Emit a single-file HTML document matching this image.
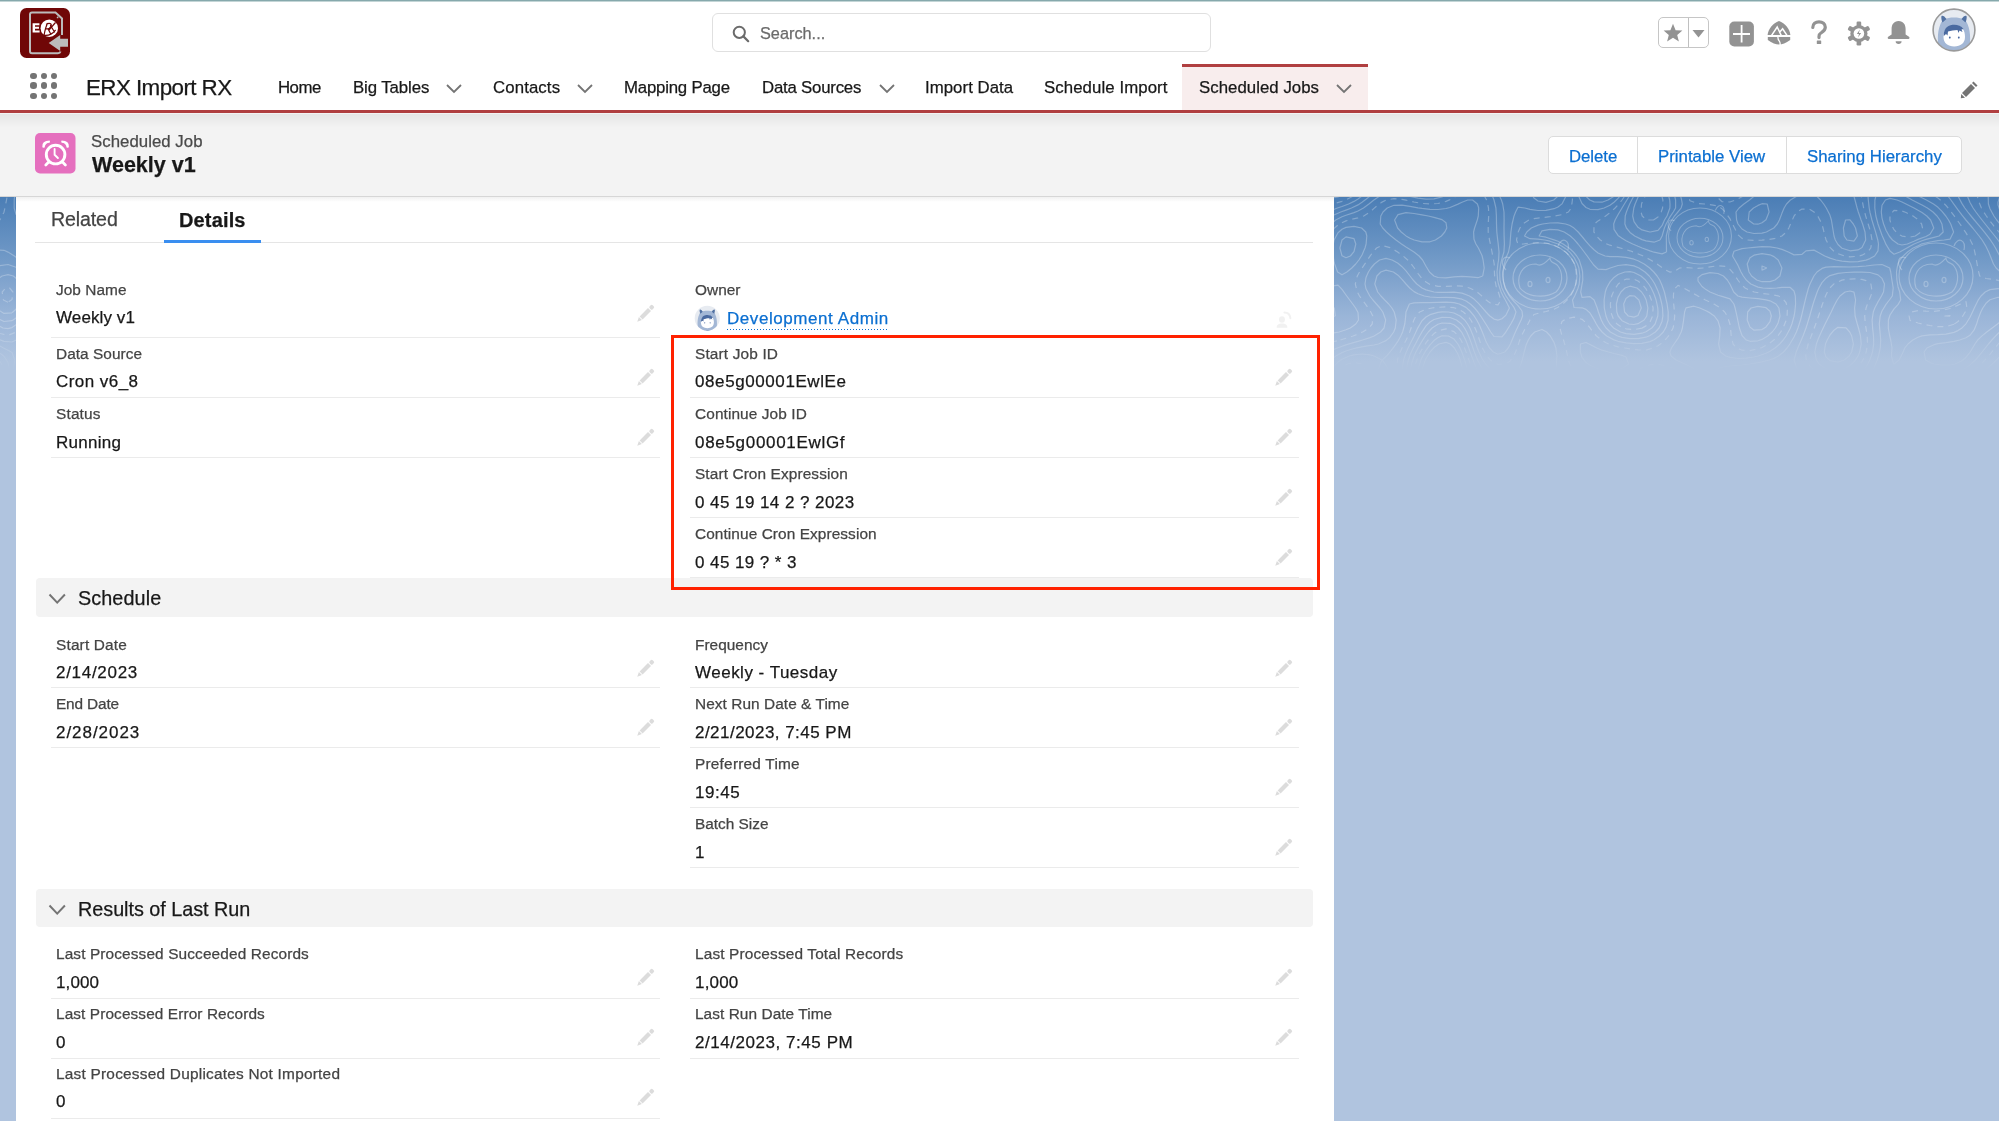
<!DOCTYPE html><html><head><meta charset="utf-8"><style>
html,body{margin:0;padding:0}
body{width:1999px;height:1121px;overflow:hidden;position:relative;background:#b0c4df;font-family:"Liberation Sans",sans-serif}
.t{position:absolute;white-space:nowrap;will-change:transform;-webkit-text-stroke:0.25px currentColor}
.r{position:absolute}
</style></head><body>
<div class="r" style="left:0px;top:196px;width:1999px;height:925px;background:linear-gradient(to bottom,#4a7db5 0px,#6f98c6 60px,#9ab5d8 120px,#b0c4df 165px,#b0c4df 100%);"></div><svg class="r" style="left:0;top:0" width="1999" height="400" viewBox="0 0 1999 400"><defs><linearGradient id="tf" x1="0" y1="196" x2="0" y2="372" gradientUnits="userSpaceOnUse"><stop offset="0" stop-color="#fff" stop-opacity="1"/><stop offset="0.75" stop-color="#fff" stop-opacity="0.85"/><stop offset="1" stop-color="#fff" stop-opacity="0"/></linearGradient><mask id="tm" maskUnits="userSpaceOnUse" x="0" y="196" width="1999" height="200"><rect x="0" y="196" width="1999" height="200" fill="url(#tf)"/></mask><clipPath id="tc"><rect x="0" y="197" width="1999" height="200"/></clipPath></defs><g clip-path="url(#tc)"><g mask="url(#tm)" fill="none" stroke="#ffffff" stroke-opacity="0.28" stroke-width="1.2" stroke-linejoin="round"><path d="M1435.4,240.0 L1441.4,236.0 L1444.8,232.0 L1446.8,228.0 L1446.0,222.7 L1442.0,219.6 L1434.0,217.4 L1428.3,216.0 L1422.0,214.9 L1414.0,213.5 L1406.0,212.7 L1398.0,214.6 L1394.6,220.0 L1397.6,228.0 L1401.2,232.0 L1406.0,235.9 L1410.0,238.2 L1414.2,240.0 L1422.0,241.9 L1430.0,241.8 L1435.4,240.0"/><path d="M1350.4,256.0 L1354.0,251.6 L1355.8,244.0 L1354.0,238.7 L1346.0,236.9 L1342.0,240.0 L1339.9,248.0 L1342.0,255.8 L1346.0,257.7 L1350.4,256.0"/><path d="M1335.3,316.0 L1334.3,308.0 L1330.0,305.9 L1325.1,308.0 L1326.0,314.9 L1330.0,317.2 L1335.3,316.0"/><path d="M1844.3,360.0 L1849.2,356.0 L1851.6,352.0 L1853.4,344.0 L1851.7,336.0 L1849.7,332.0 L1846.0,327.9 L1838.0,327.3 L1834.0,330.2 L1830.0,335.0 L1827.2,340.0 L1825.5,344.0 L1824.3,352.0 L1826.0,357.0 L1830.0,360.7 L1838.0,362.1 L1844.3,360.0"/><path d="M1482.7,276.0 L1484.2,268.0 L1483.1,260.0 L1482.0,255.5 L1478.4,248.0 L1475.9,244.0 L1474.0,239.3 L1473.6,232.0 L1474.6,228.0 L1477.3,220.0 L1478.3,216.0 L1478.7,208.0 L1477.4,204.0 L1472.6,200.0 L1467.7,200.0 L1462.0,202.2 L1458.0,204.1 L1450.0,207.5 L1446.0,208.5 L1438.0,209.5 L1430.0,209.4 L1422.0,208.4 L1418.0,207.8 L1410.0,206.3 L1402.0,205.1 L1394.0,205.3 L1387.2,208.0 L1383.0,212.0 L1380.8,216.0 L1380.2,224.0 L1382.7,228.0 L1386.5,232.0 L1391.0,236.0 L1396.0,240.0 L1401.5,244.0 L1406.0,247.0 L1410.0,249.5 L1414.0,252.1 L1419.1,256.0 L1422.6,260.0 L1426.0,266.2 L1429.5,272.0 L1433.9,276.0 L1438.0,277.5 L1446.0,277.9 L1454.0,276.9 L1462.0,276.4 L1470.0,276.9 L1478.0,277.7 L1482.7,276.0"/><path d="M1346.9,272.0 L1351.8,268.0 L1355.7,264.0 L1358.9,260.0 L1362.0,255.0 L1365.0,248.0 L1366.1,244.0 L1366.8,236.0 L1365.8,232.0 L1361.6,228.0 L1354.0,226.4 L1346.0,227.4 L1342.0,229.3 L1338.0,232.7 L1334.1,240.0 L1333.3,244.0 L1332.9,252.0 L1333.7,260.0 L1334.6,264.0 L1337.6,272.0 L1342.0,274.8 L1346.9,272.0"/><path d="M1339.2,332.0 L1346.0,329.8 L1350.3,328.0 L1355.8,324.0 L1358.5,320.0 L1358.0,312.5 L1355.6,308.0 L1352.7,304.0 L1349.7,300.0 L1346.0,295.0 L1342.0,289.4 L1338.0,285.1 L1330.0,286.4 L1326.0,288.7 L1321.3,292.0 L1316.8,296.0 L1313.6,300.0 L1310.8,308.0 L1311.9,316.0 L1314.0,320.9 L1318.0,326.5 L1322.0,330.0 L1326.0,332.0 L1334.0,332.8 L1339.2,332.0"/><path d="M1845.8,368.0 L1850.0,365.5 L1854.0,361.9 L1858.0,356.2 L1859.7,352.0 L1861.2,344.0 L1860.5,336.0 L1858.5,328.0 L1857.3,324.0 L1855.1,316.0 L1854.6,308.0 L1855.6,300.0 L1854.0,292.1 L1850.0,291.0 L1845.1,292.0 L1840.0,296.0 L1837.2,300.0 L1834.0,306.0 L1831.2,312.0 L1829.2,316.0 L1826.0,322.2 L1823.2,328.0 L1821.3,332.0 L1818.0,339.6 L1816.4,344.0 L1814.8,352.0 L1816.3,360.0 L1819.1,364.0 L1824.7,368.0 L1830.0,369.8 L1838.0,370.2 L1845.8,368.0"/><path d="M1749.9,396.0 L1753.6,392.0 L1750.0,386.7 L1743.0,388.0 L1741.1,392.0 L1744.2,396.0 L1749.9,396.0"/><path d="M1552.5,188.0 L1554.8,184.0 L1555.6,176.0 L1554.0,170.5 L1550.0,166.2 L1542.0,166.3 L1538.4,172.0 L1537.8,176.0 L1538.0,181.1 L1540.6,188.0 L1546.0,191.3 L1552.5,188.0"/><path d="M1314.4,364.0 L1318.1,360.0 L1322.5,356.0 L1328.7,352.0 L1334.0,349.4 L1338.0,347.8 L1346.0,344.9 L1350.0,343.6 L1358.0,341.3 L1362.5,340.0 L1370.0,337.6 L1374.1,336.0 L1380.6,332.0 L1384.0,328.0 L1385.7,320.0 L1382.8,312.0 L1379.9,308.0 L1376.4,304.0 L1372.9,300.0 L1369.8,296.0 L1366.0,288.8 L1365.0,284.0 L1366.0,277.5 L1368.4,272.0 L1371.0,268.0 L1374.4,264.0 L1379.5,260.0 L1386.0,258.3 L1392.1,260.0 L1398.0,263.3 L1402.0,266.7 L1406.0,270.9 L1410.0,276.0 L1413.1,280.0 L1416.8,284.0 L1422.0,288.0 L1426.0,289.9 L1434.0,292.0 L1438.0,292.3 L1446.0,292.3 L1454.0,292.2 L1462.0,293.1 L1469.5,296.0 L1474.0,299.1 L1478.0,302.9 L1482.0,307.3 L1486.0,312.0 L1489.8,316.0 L1494.0,319.1 L1498.0,320.1 L1502.0,318.8 L1506.0,315.1 L1509.4,308.0 L1506.0,301.2 L1503.1,296.0 L1501.1,292.0 L1498.4,284.0 L1497.6,280.0 L1497.0,272.0 L1497.9,264.0 L1498.6,260.0 L1499.0,252.0 L1498.2,244.0 L1497.7,240.0 L1496.8,232.0 L1496.5,224.0 L1496.4,216.0 L1495.9,208.0 L1494.0,200.0 L1492.4,196.0 L1490.0,191.6 L1486.0,186.6 L1482.0,183.3 L1474.0,180.8 L1466.0,182.4 L1462.0,184.5 L1456.9,188.0 L1451.2,192.0 L1446.0,195.1 L1442.0,196.9 L1434.0,198.9 L1426.0,199.2 L1418.0,198.2 L1410.0,196.4 L1406.0,195.4 L1398.0,193.7 L1390.0,193.2 L1382.0,195.1 L1378.0,197.2 L1373.9,200.0 L1368.9,204.0 L1363.5,208.0 L1358.0,211.0 L1354.0,212.6 L1346.0,215.3 L1342.0,216.8 L1335.7,220.0 L1331.0,224.0 L1328.3,228.0 L1326.0,233.8 L1324.8,240.0 L1324.1,248.0 L1323.6,256.0 L1322.6,264.0 L1321.6,268.0 L1318.0,275.8 L1314.9,280.0 L1311.3,284.0 L1307.5,288.0 L1303.9,292.0 L1300.6,296.0 L1298.0,300.5 L1296.0,308.0 L1297.4,316.0 L1298.9,320.0 L1302.0,327.7 L1303.8,332.0 L1306.0,338.9 L1307.4,344.0 L1308.2,352.0 L1307.8,360.0 L1310.0,367.1 L1314.4,364.0"/><path d="M1650.3,232.0 L1658.0,230.3 L1662.0,225.7 L1664.5,220.0 L1667.0,216.0 L1669.9,208.0 L1670.0,204.0 L1669.7,200.0 L1667.5,192.0 L1664.9,188.0 L1659.5,184.0 L1654.0,183.0 L1649.7,184.0 L1644.4,188.0 L1641.2,192.0 L1638.0,197.3 L1635.1,204.0 L1633.8,208.0 L1632.7,216.0 L1634.0,221.7 L1638.0,227.3 L1642.0,229.9 L1649.8,232.0 L1650.3,232.0"/><path d="M1907.3,244.0 L1914.0,241.2 L1918.0,239.4 L1926.0,236.5 L1930.0,234.3 L1933.8,228.0 L1930.6,220.0 L1926.8,216.0 L1922.0,212.5 L1918.0,210.2 L1914.0,208.0 L1906.0,204.0 L1902.0,202.0 L1897.1,200.0 L1890.0,198.4 L1885.4,200.0 L1882.0,205.3 L1881.3,212.0 L1882.0,218.1 L1883.6,224.0 L1886.0,230.3 L1889.2,236.0 L1892.5,240.0 L1898.0,244.0 L1902.0,245.0 L1907.3,244.0"/><path d="M1766.9,268.0 L1762.0,266.0 L1762.0,270.1 L1766.9,268.0"/><path d="M1839.8,384.0 L1846.0,382.6 L1851.6,380.0 L1857.8,376.0 L1862.0,372.0 L1865.3,368.0 L1867.8,364.0 L1870.0,359.4 L1872.5,352.0 L1873.7,344.0 L1873.5,336.0 L1872.6,328.0 L1872.1,320.0 L1873.3,312.0 L1874.8,308.0 L1878.0,301.9 L1881.5,296.0 L1883.5,292.0 L1884.5,284.0 L1882.0,278.4 L1878.0,274.9 L1870.0,272.5 L1862.0,272.1 L1854.0,272.2 L1846.0,272.5 L1838.0,273.3 L1830.0,275.6 L1826.0,278.2 L1822.0,282.6 L1818.9,288.0 L1817.2,292.0 L1814.4,300.0 L1813.1,304.0 L1810.8,312.0 L1809.7,316.0 L1807.3,324.0 L1806.0,328.0 L1803.0,336.0 L1801.3,340.0 L1798.0,347.6 L1796.2,352.0 L1794.1,360.0 L1796.6,368.0 L1802.0,372.0 L1806.0,374.3 L1810.0,376.5 L1817.3,380.0 L1822.0,381.9 L1830.0,384.0 L1834.0,384.4 L1839.8,384.0"/><path d="M1746.4,416.0 L1754.0,412.0 L1758.0,409.1 L1762.0,405.8 L1766.0,402.1 L1770.0,397.7 L1774.0,392.3 L1776.4,388.0 L1778.0,383.9 L1779.2,376.0 L1776.9,372.0 L1770.0,369.5 L1762.0,369.1 L1754.0,369.5 L1746.0,370.4 L1738.0,371.7 L1734.0,372.6 L1726.0,375.8 L1722.1,380.0 L1721.1,384.0 L1722.0,390.7 L1724.0,396.0 L1726.0,400.1 L1730.0,406.5 L1734.0,411.6 L1738.0,415.3"/><path d="M1537.7,156.0 L1533.1,160.0 L1530.1,168.0 L1529.6,172.0 L1529.4,180.0 L1529.9,188.0 L1530.7,192.0 L1534.0,198.1 L1538.0,201.0 L1546.0,202.4 L1553.7,200.0 L1558.0,196.1 L1560.2,192.0 L1562.0,185.9 L1562.5,180.0 L1562.0,173.2 L1560.5,168.0 L1558.0,162.9 L1554.0,158.5 L1549.7,156.0"/><path d="M1730.7,156.0 L1733.2,164.0 L1734.0,169.2 L1738.0,173.7 L1742.0,170.0 L1746.0,164.4 L1749.6,160.0 L1753.5,156.0"/><path d="M1290.0,316.3 L1293.8,324.0 L1295.5,328.0 L1298.0,335.5 L1298.8,340.0 L1298.8,348.0 L1298.0,352.1 L1296.0,360.0 L1294.7,368.0 L1295.5,376.0 L1298.0,381.4 L1302.0,385.0 L1310.0,385.4 L1314.0,382.9 L1318.0,378.4 L1322.0,372.3 L1324.5,368.0 L1327.2,364.0 L1330.8,360.0 L1335.8,356.0 L1342.0,352.6 L1346.0,351.0 L1354.0,348.5 L1358.0,347.6 L1366.0,346.2 L1374.0,345.0 L1378.4,344.0 L1386.0,340.6 L1390.0,337.2 L1393.7,332.0 L1395.3,328.0 L1396.2,320.0 L1394.2,312.0 L1391.9,308.0 L1388.7,304.0 L1384.7,300.0 L1380.9,296.0 L1377.7,292.0 L1374.8,284.0 L1376.9,276.0 L1380.8,272.0 L1386.0,270.1 L1393.4,272.0 L1398.0,275.2 L1402.0,279.3 L1406.0,284.0 L1409.7,288.0 L1414.0,291.6 L1418.0,293.8 L1424.3,296.0 L1430.0,297.0 L1438.0,297.5 L1446.0,297.4 L1454.0,297.6 L1462.0,299.2 L1466.0,301.0 L1470.4,304.0 L1474.6,308.0 L1478.0,312.2 L1482.0,318.0 L1485.8,324.0 L1488.3,328.0 L1490.7,332.0 L1494.0,336.5 L1502.0,336.8 L1505.9,332.0 L1508.3,328.0 L1510.8,324.0 L1514.0,318.1 L1516.0,312.0 L1514.0,307.4 L1510.0,302.0 L1506.0,296.2 L1503.8,292.0 L1501.9,288.0 L1500.0,280.0 L1499.7,272.0 L1500.7,264.0 L1502.0,258.5 L1503.9,252.0 L1504.4,244.0 L1504.1,236.0 L1504.0,228.0 L1504.1,220.0 L1504.0,212.0 L1502.7,204.0 L1501.4,200.0 L1498.0,192.7 L1495.3,188.0 L1492.4,184.0 L1488.8,180.0 L1483.5,176.0 L1478.0,173.8 L1470.0,173.9 L1464.4,176.0 L1458.0,179.8 L1454.0,182.9 L1450.0,186.0 L1446.0,188.8 L1440.0,192.0 L1434.0,193.9 L1426.0,194.6 L1418.0,193.7 L1410.7,192.0 L1406.0,190.7 L1398.0,188.6 L1394.0,187.9 L1386.0,187.8 L1382.0,188.7 L1375.6,192.0 L1370.1,196.0 L1366.0,199.3 L1362.0,202.3 L1358.0,204.9 L1351.5,208.0 L1346.0,210.1 L1340.7,212.0 L1334.0,215.0 L1330.0,217.6 L1326.0,221.8 L1322.9,228.0 L1321.9,232.0 L1320.8,240.0 L1320.3,248.0 L1319.6,256.0 L1318.1,264.0 L1316.7,268.0 L1314.0,273.2 L1310.0,278.6 L1306.0,282.9 L1302.0,286.9 L1298.0,290.8 L1294.0,294.9 L1290.0,299.6"/><path d="M1660.0,240.0 L1662.1,236.0 L1664.4,228.0 L1666.1,224.0 L1670.0,216.9 L1673.3,212.0 L1675.6,208.0 L1675.6,200.0 L1674.0,193.3 L1671.7,188.0 L1668.6,184.0 L1663.5,180.0 L1658.0,177.9 L1650.0,178.3 L1646.0,180.4 L1641.9,184.0 L1638.0,189.0 L1634.0,195.6 L1631.7,200.0 L1629.7,204.0 L1626.4,212.0 L1625.2,216.0 L1624.9,224.0 L1626.4,228.0 L1630.0,232.4 L1634.7,236.0 L1642.0,239.6 L1646.0,240.9 L1654.0,242.2 L1660.0,240.0"/><path d="M1899.8,252.0 L1906.0,248.5 L1910.0,246.2 L1914.1,244.0 L1922.0,240.8 L1926.0,239.4 L1934.0,237.3 L1939.0,236.0 L1943.2,232.0 L1942.0,224.3 L1939.9,220.0 L1937.0,216.0 L1933.0,212.0 L1927.4,208.0 L1922.0,205.0 L1918.0,203.0 L1912.2,200.0 L1906.0,196.5 L1902.0,194.1 L1898.0,191.7 L1890.8,188.0 L1886.0,186.4 L1879.9,188.0 L1876.9,192.0 L1874.9,200.0 L1874.8,208.0 L1875.9,216.0 L1878.0,224.0 L1879.4,228.0 L1882.0,235.2 L1884.1,240.0 L1886.0,244.4 L1890.0,251.0 L1894.0,254.2 L1899.8,252.0"/><path d="M1775.0,280.0 L1779.9,276.0 L1781.9,268.0 L1778.2,260.0 L1774.0,256.6 L1770.0,254.8 L1762.0,253.7 L1754.0,255.2 L1750.0,257.8 L1747.2,264.0 L1749.0,272.0 L1751.6,276.0 L1756.7,280.0 L1762.0,281.7 L1770.0,281.6 L1775.0,280.0"/><path d="M1757.8,416.0 L1762.0,412.3 L1766.0,408.7 L1770.0,405.1 L1774.0,401.2 L1778.0,397.0 L1782.0,392.6 L1786.0,388.2 L1790.0,384.7 L1794.0,382.7 L1802.0,382.4 L1807.8,384.0 L1814.0,386.4 L1818.0,388.1 L1826.0,391.7 L1830.0,393.3 L1838.0,394.9 L1846.0,393.4 L1850.0,391.4 L1855.6,388.0 L1861.2,384.0 L1865.6,380.0 L1869.1,376.0 L1871.8,372.0 L1874.0,367.7 L1877.2,360.0 L1878.5,356.0 L1880.3,348.0 L1880.7,340.0 L1880.0,332.0 L1879.3,324.0 L1880.2,316.0 L1882.0,311.0 L1886.0,304.4 L1889.4,300.0 L1892.3,296.0 L1893.2,288.0 L1891.9,280.0 L1890.7,272.0 L1889.7,268.0 L1882.0,264.5 L1874.0,265.0 L1866.0,266.0 L1858.0,266.7 L1850.0,267.0 L1842.0,266.8 L1834.0,266.6 L1826.0,267.1 L1822.0,268.4 L1817.0,272.0 L1813.9,276.0 L1810.0,284.0 L1808.5,288.0 L1806.3,296.0 L1805.3,300.0 L1803.4,308.0 L1802.0,314.1 L1800.5,320.0 L1798.0,327.9 L1796.4,332.0 L1794.0,337.0 L1790.0,343.8 L1787.0,348.0 L1783.5,352.0 L1778.5,356.0 L1774.0,358.4 L1769.3,360.0 L1762.0,361.8 L1754.0,363.3 L1749.6,364.0 L1742.0,365.0 L1734.0,365.7 L1726.0,366.5 L1719.0,368.0 L1714.0,371.4 L1712.4,376.0 L1713.3,384.0 L1714.6,388.0 L1718.0,395.6 L1720.3,400.0 L1722.5,404.0 L1726.0,410.4 L1729.0,416.0"/><path d="M1955.2,364.0 L1962.0,360.7 L1966.0,357.2 L1970.0,352.3 L1972.6,348.0 L1974.9,344.0 L1978.0,339.7 L1982.0,335.9 L1986.8,332.0 L1992.2,328.0 L1997.5,324.0 L2002.0,320.4 L2006.0,316.9 L2010.0,313.0 L2013.5,308.0 L2010.0,300.6 L2006.0,298.6 L1998.0,297.3 L1990.0,299.8 L1986.0,303.3 L1982.8,308.0 L1980.8,312.0 L1978.0,319.4 L1976.6,324.0 L1974.0,330.2 L1970.0,335.3 L1966.0,337.8 L1959.7,340.0 L1954.0,341.4 L1946.0,342.7 L1938.0,343.7 L1934.0,344.7 L1926.9,348.0 L1924.1,352.0 L1925.6,360.0 L1930.0,362.6 L1934.0,364.0 L1942.0,365.1 L1950.0,365.0 L1955.2,364.0"/><path d="M1900.0,408.0 L1905.6,404.0 L1908.2,400.0 L1910.0,395.2 L1910.0,388.2 L1906.8,384.0 L1902.0,383.2 L1898.0,384.5 L1892.8,388.0 L1889.4,392.0 L1886.8,400.0 L1890.0,407.7 L1894.0,409.1 L1900.0,408.0"/><path d="M1524.1,156.0 L1522.1,164.0 L1521.8,168.0 L1521.5,176.0 L1520.6,184.0 L1518.9,192.0 L1516.8,196.0 L1512.6,196.0 L1508.1,192.0 L1504.6,188.0 L1501.4,184.0 L1498.0,179.7 L1494.0,175.0 L1490.0,171.2 L1484.5,168.0 L1478.0,166.3 L1470.0,166.9 L1466.0,168.1 L1458.6,172.0 L1454.0,175.4 L1450.0,178.7 L1446.0,182.0 L1442.0,184.9 L1435.6,188.0 L1430.0,189.4 L1422.0,189.6 L1414.0,188.2 L1410.0,187.1 L1402.0,184.6 L1398.0,183.3 L1390.0,181.5 L1382.0,181.9 L1377.1,184.0 L1371.4,188.0 L1366.8,192.0 L1362.0,196.0 L1358.0,199.0 L1354.0,201.4 L1348.6,204.0 L1342.0,206.5 L1337.4,208.0 L1330.0,211.0 L1326.0,213.4 L1322.0,217.5 L1318.9,224.0 L1317.9,228.0 L1317.1,236.0 L1316.8,244.0 L1316.3,252.0 L1315.0,260.0 L1313.8,264.0 L1310.0,271.6 L1306.6,276.0 L1302.8,280.0 L1298.3,284.0 L1294.0,287.4 L1290.0,290.3"/><path d="M1290.0,385.5 L1294.0,391.5 L1298.0,394.9 L1302.0,396.6 L1309.8,396.0 L1314.0,393.8 L1318.0,390.3 L1322.0,385.2 L1325.2,380.0 L1327.5,376.0 L1330.0,371.7 L1334.0,366.1 L1338.0,362.1 L1342.0,359.3 L1349.4,356.0 L1354.0,354.8 L1362.0,354.0 L1370.0,354.9 L1374.1,356.0 L1381.8,360.0 L1378.8,368.0 L1376.3,372.0 L1374.0,376.0 L1370.7,384.0 L1369.5,388.0 L1368.5,396.0 L1370.0,403.5 L1373.8,408.0 L1378.0,409.1 L1382.0,407.7 L1386.1,404.0 L1390.0,397.0 L1391.3,392.0 L1391.9,384.0 L1390.7,376.0 L1389.3,372.0 L1386.0,365.3 L1382.3,360.0 L1386.6,356.0 L1390.0,352.0 L1394.0,346.9 L1398.0,341.1 L1400.8,336.0 L1402.6,332.0 L1404.8,324.0 L1405.7,316.0 L1406.0,311.9 L1409.4,304.0 L1414.0,302.8 L1422.0,302.6 L1430.0,302.6 L1438.0,302.4 L1446.0,302.2 L1454.0,302.7 L1459.3,304.0 L1466.0,307.4 L1470.0,311.0 L1474.0,315.8 L1476.7,320.0 L1478.9,324.0 L1482.0,331.2 L1483.9,336.0 L1486.0,341.6 L1489.5,348.0 L1493.2,352.0 L1498.0,354.2 L1504.9,352.0 L1508.2,348.0 L1510.4,344.0 L1513.7,336.0 L1515.4,332.0 L1518.0,326.5 L1521.1,320.0 L1522.6,316.0 L1522.0,311.0 L1518.0,305.7 L1514.0,301.5 L1510.0,296.9 L1507.1,292.0 L1505.1,288.0 L1503.1,280.0 L1502.6,272.0 L1504.3,264.0 L1506.0,257.8 L1508.5,252.0 L1510.0,244.6 L1510.3,240.0 L1510.9,232.0 L1512.1,224.0 L1514.0,216.1 L1515.6,212.0 L1518.0,207.2 L1524.8,208.0 L1530.0,209.3 L1538.0,210.5 L1546.0,210.3 L1554.0,208.7 L1558.0,207.0 L1562.0,203.9 L1566.0,196.1 L1566.8,192.0 L1567.4,184.0 L1567.2,176.0 L1566.0,168.7 L1564.5,164.0 L1562.0,158.7"/><path d="M1723.8,156.0 L1724.3,164.0 L1723.2,172.0 L1722.6,180.0 L1725.5,188.0 L1730.0,190.9 L1738.0,190.1 L1742.0,187.9 L1746.0,184.0 L1750.0,176.5 L1751.6,172.0 L1754.0,166.3 L1757.7,160.0 L1760.9,156.0"/><path d="M1832.6,156.0 L1836.8,160.0 L1842.0,163.0 L1846.0,164.8 L1853.0,168.0 L1858.0,170.9 L1862.0,174.6 L1865.4,180.0 L1866.6,184.0 L1867.7,192.0 L1868.3,200.0 L1869.2,208.0 L1870.0,212.4 L1871.9,220.0 L1874.0,226.9 L1875.6,232.0 L1877.8,240.0 L1878.5,244.0 L1878.0,250.8 L1874.6,256.0 L1870.0,258.6 L1866.0,260.1 L1858.0,261.6 L1850.0,261.9 L1842.0,261.2 L1836.0,260.0 L1830.0,258.1 L1824.7,256.0 L1818.0,252.3 L1814.0,250.1 L1806.0,250.9 L1802.0,254.3 L1794.0,254.9 L1788.3,252.0 L1782.0,249.4 L1777.1,248.0 L1770.0,246.8 L1762.0,246.6 L1754.0,247.3 L1747.6,248.0 L1742.0,248.6 L1734.0,251.3 L1732.5,256.0 L1734.9,260.0 L1738.0,265.4 L1741.0,272.0 L1743.3,276.0 L1746.2,280.0 L1750.8,284.0 L1758.0,287.1 L1762.8,288.0 L1770.0,288.4 L1776.6,288.0 L1782.0,287.4 L1790.0,287.3 L1794.0,291.0 L1795.3,296.0 L1795.6,304.0 L1794.8,312.0 L1794.0,316.4 L1791.9,324.0 L1790.0,328.8 L1786.1,336.0 L1783.2,340.0 L1779.7,344.0 L1775.1,348.0 L1770.0,351.3 L1766.0,353.3 L1758.2,356.0 L1754.0,357.0 L1746.0,358.2 L1738.0,358.5 L1730.0,357.4 L1725.6,356.0 L1720.5,352.0 L1718.6,344.0 L1719.7,336.0 L1720.1,328.0 L1718.0,320.8 L1714.3,316.0 L1710.0,312.9 L1706.0,310.7 L1699.8,308.0 L1694.0,306.2 L1686.0,307.9 L1684.6,312.0 L1683.6,320.0 L1682.4,328.0 L1681.2,332.0 L1678.0,338.4 L1674.1,344.0 L1671.4,348.0 L1669.9,352.0 L1671.0,356.0 L1676.1,360.0 L1682.0,362.7 L1686.0,364.5 L1692.8,368.0 L1698.0,372.0 L1701.3,376.0 L1703.9,380.0 L1706.2,384.0 L1710.0,390.7 L1712.9,396.0 L1715.2,400.0 L1718.0,405.2 L1721.3,412.0 L1722.8,416.0"/><path d="M2034.0,292.4 L2026.0,294.6 L2018.0,293.2 L2014.0,291.9 L2006.0,289.7 L1998.0,288.6 L1990.0,289.6 L1985.2,292.0 L1981.0,296.0 L1978.0,300.4 L1974.3,308.0 L1972.5,312.0 L1970.0,317.3 L1966.0,323.8 L1962.0,327.9 L1958.0,330.6 L1954.0,332.4 L1946.0,334.2 L1938.0,334.7 L1930.0,334.9 L1922.0,335.9 L1918.0,337.3 L1912.8,340.0 L1908.0,344.0 L1904.8,348.0 L1902.0,354.4 L1899.1,360.0 L1894.3,364.0 L1893.6,364.0 L1891.4,356.0 L1892.0,348.0 L1890.7,340.0 L1889.7,336.0 L1888.3,328.0 L1888.4,320.0 L1890.0,315.0 L1894.0,308.9 L1898.0,304.6 L1900.7,300.0 L1899.7,292.0 L1898.0,286.7 L1896.9,280.0 L1896.5,272.0 L1897.8,264.0 L1900.0,260.0 L1903.2,256.0 L1907.5,252.0 L1913.2,248.0 L1918.0,245.9 L1922.0,243.8 L1930.0,242.0 L1938.0,240.6 L1944.2,240.0 L1950.0,239.2 L1953.6,232.0 L1950.7,224.0 L1948.5,220.0 L1945.8,216.0 L1942.0,211.3 L1938.0,207.3 L1933.5,204.0 L1926.4,200.0 L1922.0,197.8 L1918.0,195.9 L1911.4,192.0 L1906.0,188.1 L1902.0,184.7 L1898.0,180.6 L1894.4,176.0 L1892.6,172.0 L1894.0,164.5 L1898.0,160.1 L1902.0,156.9"/><path d="M1666.5,252.0 L1666.4,244.0 L1666.3,236.0 L1668.2,228.0 L1670.0,223.0 L1674.0,216.7 L1677.9,212.0 L1681.1,208.0 L1682.3,204.0 L1681.6,200.0 L1679.6,192.0 L1677.8,188.0 L1674.0,182.6 L1670.0,178.8 L1665.9,176.0 L1658.0,173.1 L1650.0,173.5 L1644.9,176.0 L1640.3,180.0 L1637.0,184.0 L1634.0,188.4 L1630.0,194.9 L1626.9,200.0 L1624.4,204.0 L1622.0,208.0 L1618.0,214.7 L1615.1,220.0 L1613.7,224.0 L1614.0,229.4 L1618.0,235.4 L1622.0,238.3 L1626.0,240.7 L1632.7,244.0 L1638.0,246.3 L1642.2,248.0 L1650.0,250.9 L1654.0,252.2 L1662.0,253.9 L1666.5,252.0"/><path d="M1907.4,416.0 L1911.1,412.0 L1914.0,408.0 L1918.0,400.1 L1919.5,396.0 L1922.0,388.3 L1923.7,384.0 L1926.3,380.0 L1933.1,376.0 L1938.0,374.9 L1946.0,374.0 L1954.0,372.7 L1958.0,371.6 L1965.8,368.0 L1970.0,364.9 L1974.0,361.3 L1978.0,357.0 L1982.0,352.2 L1985.3,348.0 L1988.5,344.0 L1991.9,340.0 L1995.6,336.0 L1999.7,332.0 L2004.4,328.0 L2009.8,324.0 L2014.0,321.4 L2018.0,319.5 L2026.0,318.6 L2030.0,320.5 L2034.0,324.5"/><path d="M1290.0,331.7 L1291.3,336.0 L1292.0,344.0 L1290.6,352.0"/><path d="M1623.1,368.0 L1628.7,364.0 L1626.0,357.0 L1622.0,355.4 L1614.0,353.5 L1608.5,352.0 L1602.0,350.2 L1596.8,348.0 L1590.0,344.5 L1586.0,342.5 L1580.4,344.0 L1580.3,352.0 L1582.0,357.3 L1586.0,362.5 L1590.0,365.3 L1595.7,368.0 L1602.0,369.6 L1610.0,370.5 L1618.0,369.6 L1623.1,368.0"/><path d="M1764.7,416.0 L1769.1,412.0 L1773.6,408.0 L1778.0,404.3 L1782.0,400.8 L1786.0,397.6 L1790.0,394.8 L1796.4,392.0 L1802.0,391.3 L1806.1,392.0 L1814.0,395.3 L1818.0,398.2 L1822.0,402.1 L1826.0,408.0 L1828.0,412.0"/><path d="M1556.1,416.0 L1550.0,412.2 L1546.0,410.9 L1538.0,410.4 L1532.3,412.0 L1526.6,416.0"/><path d="M1358.4,156.0 L1362.0,162.8 L1363.9,168.0 L1363.2,176.0 L1361.4,180.0 L1358.0,184.8 L1354.0,188.9 L1349.9,192.0 L1342.0,195.7 L1338.0,196.8 L1330.0,198.3 L1322.0,199.7 L1318.0,201.0 L1313.6,204.0 L1310.0,209.5 L1308.3,216.0 L1307.9,224.0 L1308.4,232.0 L1309.0,240.0 L1309.0,248.0 L1308.0,256.0 L1306.0,261.9 L1302.4,268.0 L1298.8,272.0 L1294.0,275.9 L1290.0,278.2"/><path d="M1462.0,156.0 L1454.0,159.8 L1450.0,162.2 L1446.0,165.1 L1442.0,168.3 L1437.5,172.0 L1431.1,176.0 L1426.0,177.6 L1418.0,177.6 L1411.5,176.0 L1406.0,173.6 L1402.0,171.2 L1398.0,167.8 L1394.9,160.0"/><path d="M1712.7,156.0 L1711.7,164.0 L1710.0,169.1 L1706.6,176.0 L1704.0,180.0 L1700.6,184.0 L1694.0,184.2 L1690.0,181.7 L1686.0,178.8 L1682.0,175.9 L1675.9,172.0 L1670.0,168.8 L1666.0,167.0 L1658.0,164.5 L1650.0,164.3 L1642.0,167.8 L1638.0,171.4 L1634.3,176.0 L1631.5,180.0 L1628.8,184.0 L1626.0,188.2 L1622.0,193.7 L1618.0,198.4 L1614.0,202.2 L1610.0,205.2 L1604.1,208.0 L1598.0,209.7 L1590.0,209.3 L1586.0,207.5 L1582.0,203.5 L1578.6,196.0 L1577.6,192.0 L1576.3,184.0 L1575.3,176.0 L1574.1,168.0 L1573.4,164.0 L1571.3,156.0"/><path d="M1812.0,156.0 L1814.0,160.4 L1817.4,168.0 L1819.6,172.0 L1823.3,176.0 L1830.0,179.2 L1834.0,180.2 L1842.0,182.9 L1846.0,185.3 L1850.0,189.1 L1853.8,196.0 L1855.0,200.0 L1857.1,208.0 L1858.3,212.0 L1861.1,220.0 L1862.6,224.0 L1865.0,232.0 L1865.7,240.0 L1862.0,247.6 L1858.0,249.9 L1850.0,250.8 L1842.0,248.2 L1838.0,244.5 L1835.3,240.0 L1834.0,236.0 L1832.7,228.0 L1831.4,220.0 L1830.0,215.3 L1826.3,208.0 L1823.7,204.0 L1820.6,200.0 L1816.5,196.0 L1810.0,193.2 L1802.0,194.2 L1797.1,196.0 L1790.4,200.0 L1786.5,204.0 L1784.1,208.0 L1782.0,213.1 L1779.4,220.0 L1777.3,224.0 L1773.8,228.0 L1766.4,232.0 L1762.0,233.1 L1754.0,233.5 L1747.0,232.0 L1742.0,229.0 L1738.0,224.0 L1736.6,220.0 L1736.0,212.0 L1739.1,208.0 L1743.9,204.0 L1749.5,200.0 L1754.0,196.3 L1758.0,192.0 L1760.4,188.0 L1762.0,183.1 L1763.6,176.0 L1765.8,168.0 L1767.8,164.0 L1770.5,160.0 L1774.1,156.0"/><path d="M2034.0,279.8 L2030.0,280.7 L2022.0,280.5 L2018.0,279.6 L2010.0,276.9 L2006.0,275.1 L2000.6,272.0 L1996.1,268.0 L1993.5,264.0 L1990.3,256.0 L1988.7,252.0 L1986.0,246.4 L1982.1,240.0 L1979.1,236.0 L1975.9,232.0 L1972.7,228.0 L1969.3,224.0 L1965.9,220.0 L1962.0,215.2 L1958.0,209.9 L1954.0,204.3 L1950.9,200.0 L1947.9,196.0 L1944.3,192.0 L1939.3,188.0 L1934.0,184.8 L1930.0,182.6 L1926.0,180.0 L1922.0,175.3 L1920.5,168.0 L1922.0,161.6 L1924.1,156.0"/><path d="M1650.0,341.6 L1642.0,343.3 L1634.0,343.6 L1626.0,342.9 L1618.0,341.3 L1614.0,339.9 L1606.6,336.0 L1602.1,332.0 L1598.8,328.0 L1596.3,324.0 L1594.0,319.6 L1590.0,313.0 L1586.0,309.4 L1582.0,307.8 L1574.0,307.5 L1572.5,300.0 L1574.7,296.0 L1578.0,288.2 L1579.2,284.0 L1579.9,276.0 L1578.9,268.0 L1577.5,264.0 L1574.0,257.3 L1570.0,252.4 L1566.0,248.9 L1562.0,246.2 L1558.0,244.0 L1550.0,241.2 L1544.7,240.0 L1538.0,239.1 L1530.0,238.7 L1524.5,236.0 L1526.8,232.0 L1531.3,228.0 L1538.0,225.1 L1542.6,224.0 L1550.0,223.0 L1558.0,222.9 L1565.7,224.0 L1570.0,225.5 L1574.0,228.1 L1578.2,232.0 L1582.0,236.5 L1586.0,241.3 L1590.0,245.9 L1594.0,249.8 L1598.0,253.0 L1605.1,256.0 L1610.0,256.7 L1618.0,256.7 L1626.0,257.3 L1634.0,259.2 L1638.0,260.7 L1644.2,264.0 L1649.7,268.0 L1653.8,272.0 L1657.1,276.0 L1659.7,280.0 L1662.0,285.2 L1664.4,292.0 L1666.0,299.0 L1667.1,304.0 L1668.2,312.0 L1668.1,320.0 L1666.0,327.3 L1663.3,332.0 L1659.4,336.0 L1654.0,339.7 L1650.0,341.6"/><path d="M1758.0,340.8 L1750.0,341.3 L1746.0,339.9 L1742.0,335.5 L1739.4,328.0 L1738.0,321.4 L1736.9,316.0 L1735.1,308.0 L1733.9,304.0 L1730.0,298.9 L1722.0,296.4 L1718.0,295.2 L1710.0,292.0 L1706.0,289.6 L1702.0,286.5 L1698.0,281.0 L1698.0,277.7 L1702.0,274.6 L1710.0,272.6 L1718.0,273.5 L1723.4,276.0 L1727.3,280.0 L1730.0,284.3 L1733.7,292.0 L1737.9,296.0 L1742.0,297.2 L1750.0,298.0 L1758.0,298.7 L1766.0,299.8 L1770.0,300.8 L1776.0,304.0 L1778.9,308.0 L1780.0,316.0 L1778.0,323.3 L1775.4,328.0 L1772.2,332.0 L1767.7,336.0 L1762.0,339.4 L1758.0,340.8"/><path d="M1396.4,416.0 L1398.0,410.8 L1399.9,404.0 L1401.3,396.0 L1402.0,388.2 L1402.1,384.0 L1402.2,376.0 L1402.4,368.0 L1403.5,360.0 L1406.0,352.7 L1408.1,348.0 L1410.1,344.0 L1414.0,336.2 L1415.9,332.0 L1418.0,327.6 L1422.0,320.8 L1426.0,317.0 L1430.0,314.7 L1438.0,312.4 L1442.0,311.9 L1448.4,312.0 L1454.0,313.0 L1460.0,316.0 L1464.6,320.0 L1467.6,324.0 L1470.0,328.2 L1473.2,336.0 L1474.6,340.0 L1477.3,348.0 L1478.9,352.0 L1482.0,358.5 L1485.6,364.0 L1489.2,368.0 L1493.8,372.0 L1498.0,374.7 L1502.0,376.2 L1510.0,376.7 L1514.0,374.8 L1518.0,370.4 L1521.0,364.0 L1522.2,360.0 L1524.2,352.0 L1526.0,345.3 L1528.3,340.0 L1530.8,336.0 L1534.7,332.0 L1542.0,329.5 L1546.6,332.0 L1550.3,336.0 L1554.0,342.4 L1555.9,348.0 L1556.9,356.0 L1556.4,364.0 L1555.7,372.0 L1557.2,380.0 L1562.0,382.4 L1570.0,382.6 L1578.0,382.6 L1586.0,382.8 L1594.0,383.2 L1602.0,383.6 L1610.0,383.7 L1618.0,383.0 L1626.0,381.3 L1630.2,380.0 L1638.0,376.8 L1642.0,375.2 L1650.0,372.6 L1654.0,371.9 L1662.0,371.9 L1666.0,372.5 L1674.0,374.5 L1678.0,376.0 L1686.0,379.8 L1690.0,382.5 L1694.0,385.9 L1698.0,390.1 L1702.0,395.2 L1705.3,400.0 L1707.6,404.0 L1710.0,408.9 L1712.3,416.0"/><path d="M1950.0,316.3 L1944.8,316.0 L1950.0,315.7 L1950.0,316.3"/><path d="M1925.9,416.0 L1927.7,412.0 L1930.0,407.2 L1934.0,400.0 L1937.1,396.0 L1941.8,392.0 L1946.0,389.9 L1951.1,388.0 L1958.0,385.9 L1962.9,384.0 L1970.0,380.6 L1974.0,378.2 L1978.0,375.5 L1982.6,372.0 L1987.6,368.0 L1992.3,364.0 L1996.5,360.0 L2000.4,356.0 L2003.9,352.0 L2007.4,348.0 L2011.9,344.0 L2018.0,342.2 L2021.2,348.0 L2019.9,356.0 L2018.6,364.0 L2018.6,372.0 L2019.6,380.0 L2021.2,388.0 L2022.3,392.0 L2025.1,400.0 L2027.3,404.0 L2030.3,408.0"/><path d="M1313.4,416.0 L1318.0,412.5 L1322.0,408.8 L1326.0,404.5 L1329.6,400.0 L1332.5,396.0 L1335.0,392.0 L1338.0,386.7 L1342.0,380.6 L1346.0,376.8 L1350.0,375.7 L1353.1,380.0 L1352.7,388.0 L1352.0,396.0 L1352.4,404.0 L1354.0,410.1 L1356.3,416.0"/><path d="M1569.9,416.0 L1566.1,408.0 L1563.8,404.0 L1561.4,400.0 L1558.0,394.1 L1554.0,388.8 L1550.0,387.2 L1542.0,387.2 L1534.0,387.9 L1530.0,388.2 L1522.0,389.3 L1515.0,392.0 L1510.0,395.3 L1506.0,399.0 L1502.0,402.9 L1498.0,406.5 L1494.0,409.2 L1487.4,412.0 L1482.0,413.6 L1474.0,415.8"/><path d="M1778.9,416.0 L1785.1,412.0 L1790.0,409.7 L1798.0,408.3 L1806.0,411.7 L1809.7,416.0"/><path d="M1290.0,163.1 L1294.0,165.7 L1298.0,168.1 L1306.0,170.7 L1311.9,168.0 L1316.5,164.0 L1320.5,160.0 L1324.7,156.0"/><path d="M1347.9,156.0 L1350.5,160.0 L1354.0,167.8 L1354.6,172.0 L1354.0,176.5 L1350.0,183.4 L1346.0,186.7 L1342.0,188.8 L1334.0,190.6 L1326.0,190.5 L1318.0,189.5 L1310.0,191.6 L1306.7,196.0 L1304.8,200.0 L1302.7,208.0 L1302.0,214.5 L1302.0,218.6 L1302.4,224.0 L1303.5,232.0 L1304.5,240.0 L1304.8,248.0 L1303.5,256.0 L1302.0,260.2 L1298.0,266.2 L1294.0,270.0 L1290.0,272.5"/><path d="M1447.2,156.0 L1442.0,158.9 L1438.0,161.4 L1434.0,164.1 L1426.7,168.0 L1422.0,169.1 L1414.0,168.1 L1410.0,165.8 L1406.0,161.2 L1404.5,156.0"/><path d="M1707.1,156.0 L1706.0,161.3 L1702.2,168.0 L1698.0,171.5 L1694.0,172.7 L1688.6,172.0 L1682.0,169.8 L1678.0,167.9 L1670.0,164.2 L1666.0,162.6 L1658.0,160.1 L1654.0,159.5 L1648.1,160.0 L1642.0,162.4 L1638.0,165.7 L1634.0,170.3 L1630.1,176.0 L1627.5,180.0 L1624.8,184.0 L1621.9,188.0 L1618.0,192.6 L1614.0,196.3 L1608.0,200.0 L1602.0,202.2 L1594.0,201.9 L1589.8,200.0 L1585.6,196.0 L1582.0,189.0 L1580.6,184.0 L1579.1,176.0 L1578.0,168.1 L1577.4,164.0 L1576.0,156.0"/><path d="M1801.4,156.0 L1804.3,160.0 L1806.0,164.0 L1806.9,172.0 L1805.9,176.0 L1802.0,180.9 L1797.5,184.0 L1790.0,187.7 L1786.0,189.3 L1778.0,191.5 L1772.7,188.0 L1771.1,180.0 L1771.7,172.0 L1774.0,165.8 L1778.0,160.3 L1782.0,157.0"/><path d="M2034.0,274.1 L2026.0,274.9 L2018.0,273.2 L2014.0,271.4 L2008.7,268.0 L2004.6,264.0 L2001.9,260.0 L1998.0,252.6 L1995.5,248.0 L1993.1,244.0 L1990.0,239.4 L1986.0,234.2 L1982.0,229.2 L1978.0,224.3 L1974.3,220.0 L1971.0,216.0 L1967.8,212.0 L1964.8,208.0 L1962.0,203.6 L1958.0,196.1 L1956.1,192.0 L1954.0,187.2 L1950.0,180.4 L1946.0,176.3 L1942.0,173.1 L1938.0,169.6 L1934.9,164.0 L1934.9,156.0"/><path d="M1758.0,224.2 L1753.7,224.0 L1748.3,220.0 L1749.2,212.0 L1753.5,208.0 L1758.0,205.4 L1762.0,203.7 L1767.2,204.0 L1769.1,212.0 L1766.0,219.8 L1762.0,222.8 L1758.0,224.2"/><path d="M1854.0,241.2 L1846.9,240.0 L1844.2,236.0 L1843.4,228.0 L1845.6,220.0 L1850.0,219.9 L1853.3,224.0 L1855.5,228.0 L1857.4,236.0 L1854.0,241.2"/><path d="M1646.0,337.2 L1638.0,338.7 L1630.0,338.7 L1622.0,337.4 L1617.6,336.0 L1610.3,332.0 L1606.1,328.0 L1603.3,324.0 L1601.3,320.0 L1598.4,312.0 L1597.2,308.0 L1594.1,300.0 L1590.0,296.6 L1582.0,297.3 L1580.7,292.0 L1582.0,284.4 L1582.8,280.0 L1582.6,272.0 L1581.7,268.0 L1579.2,260.0 L1576.7,256.0 L1573.4,252.0 L1569.0,248.0 L1563.1,244.0 L1558.0,241.3 L1554.0,239.9 L1546.0,237.2 L1539.1,236.0 L1542.0,230.8 L1550.0,229.4 L1558.0,229.9 L1564.2,232.0 L1570.0,235.7 L1574.0,239.4 L1578.0,244.0 L1581.2,248.0 L1584.2,252.0 L1587.2,256.0 L1590.0,260.0 L1594.0,265.3 L1598.0,269.1 L1606.0,269.6 L1610.2,268.0 L1618.0,265.5 L1626.0,264.6 L1634.0,265.9 L1639.0,268.0 L1645.0,272.0 L1649.2,276.0 L1652.3,280.0 L1654.8,284.0 L1658.0,291.1 L1659.8,296.0 L1661.8,304.0 L1662.5,308.0 L1662.9,316.0 L1662.0,321.4 L1659.0,328.0 L1655.4,332.0 L1650.0,335.5 L1646.0,337.2"/><path d="M1762.0,329.6 L1754.0,330.2 L1750.0,327.1 L1747.2,320.0 L1747.7,312.0 L1751.0,308.0 L1758.0,306.3 L1766.0,307.7 L1770.0,311.3 L1771.3,316.0 L1770.0,321.6 L1766.0,326.9 L1762.0,329.6"/><path d="M1404.4,416.0 L1405.0,408.0 L1405.7,400.0 L1406.0,392.3 L1406.1,388.0 L1406.1,380.0 L1406.4,372.0 L1407.3,364.0 L1409.7,356.0 L1411.3,352.0 L1414.0,346.6 L1417.5,340.0 L1419.7,336.0 L1422.0,331.9 L1426.0,325.9 L1430.0,322.0 L1434.0,319.5 L1442.0,317.3 L1450.0,317.5 L1456.5,320.0 L1461.5,324.0 L1464.5,328.0 L1466.8,332.0 L1470.0,339.6 L1471.6,344.0 L1474.0,351.1 L1475.9,356.0 L1478.0,360.9 L1481.8,368.0 L1484.3,372.0 L1486.8,376.0 L1490.0,382.0 L1491.9,388.0 L1490.0,394.8 L1486.3,400.0 L1482.0,403.6 L1478.0,406.1 L1474.0,408.3 L1466.0,411.8 L1462.0,413.5 L1456.0,416.0"/><path d="M1936.0,416.0 L1938.0,411.1 L1942.0,404.8 L1946.0,400.8 L1950.0,398.2 L1954.3,396.0 L1962.0,392.8 L1966.0,391.0 L1972.0,388.0 L1978.0,384.6 L1982.0,382.3 L1986.0,379.8 L1993.6,376.0 L1998.0,374.7 L2003.8,376.0 L2007.1,380.0 L2009.8,388.0 L2010.5,392.0 L2011.7,400.0 L2014.0,407.6 L2017.1,412.0 L2021.8,416.0"/><path d="M1575.2,416.0 L1574.0,410.3 L1572.9,404.0 L1574.0,397.4 L1578.0,393.0 L1582.0,391.2 L1590.0,389.6 L1598.0,389.1 L1606.0,388.9 L1614.0,388.6 L1620.0,388.0 L1626.0,386.9 L1634.0,384.4 L1638.0,382.9 L1645.5,380.0 L1650.0,378.6 L1658.0,377.5 L1666.0,378.0 L1674.0,380.0 L1678.0,381.5 L1683.1,384.0 L1689.1,388.0 L1693.5,392.0 L1697.1,396.0 L1700.0,400.0 L1702.6,404.0 L1706.0,411.7 L1706.9,416.0"/><path d="M1329.3,416.0 L1334.0,412.7 L1338.0,411.5 L1342.0,412.9"/><path d="M1642.5,156.0 L1638.0,159.1 L1634.0,163.6 L1631.0,168.0 L1628.4,172.0 L1625.9,176.0 L1622.0,181.9 L1618.0,186.9 L1614.0,190.7 L1610.0,193.5 L1602.8,196.0 L1598.0,196.1 L1594.0,194.8 L1590.0,191.9 L1586.0,185.8 L1584.1,180.0 L1582.4,172.0 L1581.9,168.0 L1581.0,160.0"/><path d="M1700.4,156.0 L1698.0,160.8 L1693.7,164.0 L1686.0,164.8 L1682.0,163.9 L1674.0,161.1 L1670.0,159.5 L1662.0,156.4"/><path d="M2034.0,267.9 L2030.0,268.6 L2023.9,268.0 L2018.0,265.6 L2014.0,262.6 L2010.0,258.2 L2006.0,252.1 L2003.5,248.0 L2000.8,244.0 L1998.0,240.0 L1994.0,235.0 L1990.0,230.0 L1986.0,225.0 L1982.0,220.0 L1978.9,216.0 L1975.9,212.0 L1973.1,208.0 L1970.0,202.5 L1967.3,196.0 L1966.0,188.0 L1966.7,180.0 L1968.9,172.0 L1970.3,168.0 L1970.0,162.4 L1966.0,159.2 L1961.8,156.0"/><path d="M1979.2,156.0 L1982.0,161.6 L1990.0,162.3 L1998.0,161.5 L2006.0,160.9 L2014.0,161.4 L2022.0,163.8 L2026.0,165.6 L2030.0,168.0"/><path d="M1338.0,177.1 L1331.7,176.0 L1334.0,168.8 L1340.4,172.0 L1338.0,177.1"/><path d="M1290.0,174.6 L1294.0,179.7 L1296.2,184.0 L1297.4,192.0 L1296.9,200.0 L1296.3,208.0 L1296.1,216.0 L1296.8,224.0 L1298.0,231.1 L1298.9,236.0 L1299.9,244.0 L1299.4,252.0 L1298.0,256.7 L1294.0,262.8 L1290.0,266.0"/><path d="M1642.0,333.2 L1634.0,334.3 L1626.0,333.6 L1620.4,332.0 L1614.0,328.3 L1610.0,324.2 L1607.5,320.0 L1606.0,316.0 L1604.3,308.0 L1604.1,300.0 L1605.3,292.0 L1606.6,288.0 L1610.0,281.9 L1614.0,277.4 L1618.0,274.5 L1624.8,272.0 L1630.0,271.7 L1634.0,272.5 L1640.9,276.0 L1645.5,280.0 L1648.7,284.0 L1651.2,288.0 L1654.0,294.0 L1656.1,300.0 L1657.8,308.0 L1658.0,312.0 L1657.8,316.0 L1655.1,324.0 L1651.8,328.0 L1646.0,331.8 L1642.0,333.2"/><path d="M1415.0,416.0 L1413.0,412.0 L1411.3,404.0 L1410.5,396.0 L1410.1,388.0 L1409.9,384.0 L1410.0,376.0 L1410.2,372.0 L1411.5,364.0 L1414.0,356.3 L1415.9,352.0 L1418.0,348.0 L1422.0,341.1 L1425.3,336.0 L1428.3,332.0 L1432.1,328.0 L1438.0,324.2 L1442.0,323.0 L1450.0,323.3 L1454.0,324.8 L1458.2,328.0 L1462.0,332.7 L1465.7,340.0 L1467.3,344.0 L1470.0,351.5 L1471.6,356.0 L1474.0,362.4 L1476.3,368.0 L1478.0,372.2 L1480.7,380.0 L1481.2,388.0 L1478.0,395.4 L1474.0,399.7 L1470.0,402.7 L1466.0,405.1 L1460.0,408.0 L1454.0,410.5 L1450.0,412.0 L1442.0,415.0"/><path d="M1580.3,416.0 L1580.5,408.0 L1582.0,403.1 L1586.0,398.6 L1591.8,396.0 L1598.0,394.8 L1606.0,394.1 L1614.0,393.8 L1622.0,393.3 L1629.7,392.0 L1634.0,390.9 L1641.3,388.0 L1646.0,386.2 L1652.9,384.0 L1658.0,383.2 L1666.0,383.5 L1670.0,384.2 L1678.0,387.0 L1682.0,389.1 L1686.3,392.0 L1690.8,396.0 L1694.3,400.0 L1698.0,406.0 L1700.3,412.0"/><path d="M1959.8,416.0 L1962.0,410.3 L1966.0,406.7 L1970.0,403.9 L1978.0,400.4 L1982.0,399.5 L1986.0,401.4 L1986.0,406.5 L1983.7,412.0 L1981.5,416.0"/><path d="M1625.3,156.0 L1622.8,164.0 L1620.9,168.0 L1618.0,173.2 L1614.0,178.3 L1610.0,181.6 L1602.0,183.8 L1595.5,180.0 L1593.0,176.0 L1590.8,168.0 L1590.5,160.0"/><path d="M2026.0,244.7 L2022.0,243.1 L2017.6,240.0 L2012.7,236.0 L2008.0,232.0 L2003.7,228.0 L2000.0,224.0 L1996.7,220.0 L1993.9,216.0 L1990.0,208.7 L1988.4,204.0 L1988.2,196.0 L1990.0,191.9 L1994.0,187.3 L1998.5,184.0 L2006.0,180.4 L2010.0,179.4 L2018.0,179.7 L2022.0,181.3 L2026.0,184.2 L2030.0,190.2 L2031.8,196.0 L2032.5,204.0 L2032.4,212.0 L2032.0,220.0 L2031.7,228.0 L2031.3,236.0 L2030.0,242.5 L2026.0,244.7"/><path d="M1634.0,324.5 L1628.8,324.0 L1622.0,320.7 L1618.2,316.0 L1616.8,312.0 L1616.4,304.0 L1618.0,297.4 L1620.9,292.0 L1625.0,288.0 L1630.0,286.2 L1637.0,288.0 L1641.6,292.0 L1644.3,296.0 L1646.2,300.0 L1647.9,308.0 L1646.8,316.0 L1644.1,320.0 L1638.0,323.7 L1634.0,324.5"/><path d="M1450.0,400.1 L1442.0,402.2 L1434.0,402.8 L1426.0,400.3 L1422.0,396.2 L1420.0,392.0 L1418.0,384.2 L1417.6,380.0 L1417.8,372.0 L1418.5,368.0 L1420.9,360.0 L1422.7,356.0 L1426.0,350.4 L1430.0,344.9 L1434.0,340.6 L1438.0,337.6 L1442.0,335.8 L1448.4,336.0 L1454.0,339.1 L1457.9,344.0 L1460.0,348.0 L1462.0,352.5 L1464.6,360.0 L1466.0,364.5 L1467.7,372.0 L1468.2,380.0 L1466.0,387.7 L1462.9,392.0 L1458.2,396.0 L1454.0,398.3 L1450.0,400.1"/><path d="M1678.0,410.4 L1670.0,408.8 L1666.0,405.7 L1665.9,400.0 L1670.0,399.6 L1674.0,400.8 L1678.6,404.0 L1678.0,410.4"/><path d="M1592.1,416.0 L1594.2,412.0 L1599.1,408.0 L1606.0,406.0 L1614.0,406.0 L1621.0,408.0 L1625.1,412.0"/><path d="M1616.3,156.0 L1615.8,164.0 L1614.0,168.3 L1610.0,173.2 L1602.0,174.8 L1598.0,170.0 L1597.0,164.0 L1598.0,157.7"/><path d="M2018.0,224.9 L2012.7,224.0 L2006.5,220.0 L2002.9,216.0 L2000.3,212.0 L1998.0,204.7 L1998.0,202.1 L1999.9,196.0 L2003.5,192.0 L2010.0,188.7 L2018.0,189.5 L2022.0,192.8 L2025.0,200.0 L2025.6,208.0 L2024.3,216.0 L2022.0,221.9 L2018.0,224.9"/><path d="M1634.0,317.1 L1628.3,316.0 L1624.6,312.0 L1623.7,304.0 L1626.0,298.6 L1630.0,295.6 L1634.5,296.0 L1638.9,300.0 L1641.3,308.0 L1638.0,315.5 L1634.0,317.1"/><path d="M1442.0,396.2 L1434.0,396.0 L1430.0,394.4 L1426.0,390.9 L1422.8,384.0 L1422.0,380.0 L1421.9,372.0 L1422.6,368.0 L1425.3,360.0 L1427.5,356.0 L1430.1,352.0 L1434.0,347.6 L1438.9,344.0 L1446.0,342.4 L1450.3,344.0 L1454.4,348.0 L1458.0,354.2 L1460.2,360.0 L1462.0,366.8 L1462.8,372.0 L1462.3,380.0 L1460.8,384.0 L1458.0,388.2 L1453.4,392.0 L1446.0,395.3 L1442.0,396.2"/><path d="M-8.0,404.0 L-4.0,397.5 L-2.8,392.0 L-2.9,384.0 L-4.0,379.8 L-8.0,375.7 L-12.0,376.6 L-16.0,382.0 L-18.3,388.0 L-20.0,393.5 L-20.5,400.0 L-19.0,404.0 L-12.0,406.3 L-8.0,404.0"/><path d="M60.0,302.4 L53.7,304.0 L51.1,308.0 L48.0,315.3 L46.6,320.0 L44.7,328.0 L45.4,336.0 L49.3,340.0 L56.0,341.8"/><path d="M-40.0,341.0 L-36.0,337.3 L-35.0,332.0 L-35.9,324.0 L-36.8,320.0 L-39.1,312.0"/><path d="M-9.4,412.0 L-4.4,408.0 L-1.8,404.0 L0.0,399.9 L1.6,392.0 L2.0,384.0 L1.0,376.0 L-0.3,372.0 L-4.0,367.1 L-12.0,364.9 L-16.0,368.0 L-19.4,376.0 L-20.7,380.0 L-23.2,388.0 L-24.4,392.0 L-26.0,400.0 L-24.9,408.0 L-21.0,412.0 L-16.0,413.5 L-9.4,412.0"/><path d="M-28.1,156.0 L-24.0,158.1 L-16.4,160.0 L-13.8,160.0 L-8.0,158.9 L-3.3,156.0"/><path d="M60.0,276.7 L52.0,278.9 L49.2,284.0 L47.4,288.0 L44.7,296.0 L43.5,300.0 L41.3,308.0 L40.0,312.1 L37.4,320.0 L36.0,324.0 L33.4,332.0 L32.1,340.0 L36.0,346.8 L40.0,348.9 L48.0,350.9 L53.8,352.0 L60.0,353.2"/><path d="M0.4,416.0 L4.0,409.4 L5.8,404.0 L7.5,396.0 L8.1,392.0 L8.8,384.0 L9.2,376.0 L9.1,368.0 L8.0,362.5 L4.0,356.3 L0.0,353.3 L-4.0,350.9 L-8.8,348.0 L-14.1,344.0 L-17.7,340.0 L-20.2,336.0 L-23.9,328.0 L-25.4,324.0 L-28.0,316.0 L-29.1,312.0 L-31.2,304.0 L-32.3,300.0 L-34.7,292.0 L-36.0,288.0 L-40.0,280.4"/><path d="M-40.0,354.3 L-36.0,356.1 L-31.3,360.0 L-28.1,368.0 L-27.7,372.0 L-28.0,376.7 L-29.3,384.0 L-31.6,392.0 L-32.9,396.0 L-34.9,404.0 L-34.5,412.0"/><path d="M-35.2,156.0 L-30.0,160.0 L-24.0,163.0 L-20.0,164.4 L-12.0,165.8 L-4.9,164.0 L0.0,160.2 L3.0,156.0"/><path d="M60.0,263.1 L52.1,260.0 L52.0,260.0 L48.0,266.3 L46.7,272.0 L44.6,280.0 L43.6,284.0 L41.8,292.0 L40.0,299.2 L38.8,304.0 L36.5,312.0 L35.1,316.0 L32.0,323.9 L30.2,328.0 L28.0,333.3 L25.3,340.0 L24.5,348.0 L31.0,352.0 L36.0,353.0 L44.0,354.3 L52.0,355.5 L56.0,356.4"/><path d="M5.1,416.0 L8.0,408.1 L9.0,404.0 L10.4,396.0 L11.3,388.0 L12.0,381.5 L12.6,376.0 L13.7,368.0 L14.7,360.0 L12.0,352.5 L8.0,350.2 L3.5,348.0 L-4.0,344.1 L-8.0,341.4 L-12.0,337.8 L-16.0,332.8 L-18.8,328.0 L-20.8,324.0 L-23.8,316.0 L-25.1,312.0 L-27.3,304.0 L-28.3,300.0 L-30.2,292.0 L-32.0,284.6 L-33.4,280.0 L-36.0,273.3 L-39.4,268.0"/><path d="M-40.0,359.4 L-36.0,362.5 L-32.6,368.0 L-31.7,372.0 L-31.8,380.0 L-32.5,384.0 L-34.8,392.0 L-36.2,396.0 L-38.7,404.0 L-39.2,412.0"/><path d="M-40.0,157.2 L-36.0,161.0 L-31.5,164.0 L-24.0,167.9 L-20.0,169.9 L-14.7,172.0 L-8.0,174.5 L-0.6,172.0 L2.4,168.0 L4.7,164.0 L8.0,156.4"/><path d="M60.0,246.2 L56.0,242.0 L52.0,239.1 L44.0,236.2 L40.0,235.9 L36.0,236.5 L30.9,240.0 L31.2,248.0 L33.2,252.0 L36.0,257.0 L39.0,264.0 L40.0,270.9 L40.0,276.0 L39.8,280.0 L38.7,288.0 L37.3,296.0 L36.0,301.6 L34.3,308.0 L32.0,314.6 L29.7,320.0 L27.8,324.0 L24.0,330.8 L20.3,336.0 L16.3,340.0 L12.0,342.0 L4.0,341.4 L0.0,339.9 L-6.1,336.0 L-10.4,332.0 L-13.5,328.0 L-16.0,324.0 L-19.7,316.0 L-21.2,312.0 L-23.6,304.0 L-24.6,300.0 L-26.2,292.0 L-27.6,284.0 L-28.2,280.0 L-29.8,272.0 L-32.0,265.0 L-34.4,260.0 L-36.9,256.0 L-40.0,251.4"/><path d="M9.4,416.0 L11.4,408.0 L12.1,404.0 L13.2,396.0 L14.1,388.0 L15.2,380.0 L16.0,375.7 L18.3,368.0 L20.3,364.0 L24.3,360.0 L32.0,357.7 L40.0,357.7 L48.0,358.4 L55.4,360.0 L60.0,361.8"/><path d="M-40.0,364.6 L-36.0,370.8 L-34.9,376.0 L-35.6,384.0 L-36.7,388.0 L-39.5,396.0"/><path d="M60.0,226.1 L52.0,225.2 L44.0,224.2 L40.0,223.7 L32.0,222.7 L24.0,220.9 L20.0,218.9 L16.0,214.3 L14.2,208.0 L14.2,200.0 L15.2,192.0 L16.0,187.0 L17.0,180.0 L17.6,172.0 L17.9,164.0 L18.1,156.0"/><path d="M51.9,156.0 L54.1,160.0 L58.1,164.0"/><path d="M-40.0,168.2 L-34.1,172.0 L-28.8,176.0 L-25.0,180.0 L-22.7,184.0 L-21.2,192.0 L-21.9,200.0 L-23.6,208.0 L-24.7,212.0 L-27.8,220.0 L-31.2,224.0 L-36.0,226.0"/><path d="M8.0,328.7 L2.9,328.0 L-4.0,324.0 L-7.7,320.0 L-10.4,316.0 L-12.6,312.0 L-15.7,304.0 L-16.8,300.0 L-18.1,292.0 L-18.5,284.0 L-17.7,276.0 L-16.0,268.2 L-14.6,264.0 L-12.0,257.2 L-8.1,252.0 L-4.0,249.8 L4.0,250.3 L8.0,252.1 L14.4,256.0 L19.7,260.0 L23.8,264.0 L26.7,268.0 L28.8,272.0 L30.8,280.0 L31.1,288.0 L30.2,296.0 L28.4,304.0 L27.1,308.0 L24.0,315.0 L20.8,320.0 L17.2,324.0 L12.0,327.6 L8.0,328.7"/><path d="M18.2,416.0 L18.4,408.0 L18.7,400.0 L19.2,392.0 L20.0,386.1 L21.5,380.0 L24.0,374.1 L28.0,369.3 L32.0,366.8 L40.0,365.0 L48.0,365.4 L55.4,368.0 L59.8,372.0"/><path d="M60.0,390.5 L57.7,396.0 L55.9,400.0 L52.6,408.0 L51.5,412.0"/><path d="M60.0,219.5 L56.0,220.0 L50.1,220.0 L44.0,219.5 L36.0,218.1 L29.5,216.0 L24.0,212.0 L21.6,208.0 L20.3,200.0 L21.0,192.0 L22.5,184.0 L24.0,176.6 L24.8,172.0 L25.4,164.0 L24.3,156.0"/><path d="M45.1,156.0 L48.0,161.7 L52.0,165.4 L56.0,168.2"/><path d="M-40.0,173.2 L-36.0,176.0 L-31.7,180.0 L-28.0,186.8 L-27.1,192.0 L-27.8,200.0 L-28.9,204.0 L-32.0,211.0 L-36.0,215.9 L-40.0,218.3"/><path d="M12.0,320.7 L4.0,321.5 L0.0,319.6 L-4.2,316.0 L-8.0,310.6 L-11.0,304.0 L-12.3,300.0 L-13.5,292.0 L-13.1,284.0 L-12.0,279.3 L-8.2,272.0 L-4.2,268.0 L0.0,265.6 L8.0,264.5 L16.0,267.2 L20.0,270.3 L24.0,275.7 L25.6,280.0 L26.8,288.0 L26.2,296.0 L24.4,304.0 L22.8,308.0 L20.0,313.2 L16.0,317.9 L12.0,320.7"/><path d="M23.6,416.0 L22.6,408.0 L22.1,400.0 L22.4,392.0 L23.7,384.0 L25.1,380.0 L28.0,374.9 L32.0,371.4 L40.0,368.8 L48.0,369.3 L53.8,372.0 L57.1,376.0 L58.1,384.0 L56.0,391.7 L54.0,396.0 L52.0,400.0 L48.0,407.8 L46.1,412.0"/><path d="M60.0,213.3 L52.0,215.1 L44.0,214.8 L36.0,212.8 L32.0,210.7 L28.0,206.3 L26.0,200.0 L26.4,192.0 L28.0,185.2 L29.9,180.0 L32.0,175.2 L36.0,169.9 L44.0,168.9 L52.0,171.8 L56.0,173.7"/><path d="M-40.0,178.8 L-36.0,182.9 L-33.3,188.0 L-32.7,196.0 L-35.0,204.0 L-37.4,208.0"/><path d="M12.0,312.8 L4.0,313.4 L0.0,310.9 L-4.0,305.9 L-6.5,300.0 L-7.8,292.0 L-5.9,284.0 L-3.5,280.0 L2.1,276.0 L8.0,274.7 L13.3,276.0 L18.2,280.0 L20.4,284.0 L21.6,292.0 L20.6,300.0 L19.1,304.0 L16.0,309.3 L12.0,312.8"/><path d="M36.0,412.8 L31.6,412.0 L28.0,406.9 L26.4,400.0 L26.1,392.0 L27.5,384.0 L29.5,380.0 L33.0,376.0 L40.0,373.0 L48.0,374.0 L52.0,377.1 L53.9,384.0 L52.0,391.3 L49.6,396.0 L47.1,400.0 L44.0,404.7 L40.0,409.7 L36.0,412.8"/><path d="M52.0,202.4 L44.0,202.2 L40.0,198.1 L39.7,192.0 L42.1,188.0 L48.0,185.0 L55.8,188.0 L57.9,192.0 L56.0,199.9 L52.0,202.4"/><g transform="translate(1540 276) scale(1.0)"><ellipse cx="0" cy="0" rx="37" ry="33"/><ellipse cx="0" cy="2" rx="27" ry="23"/><path d="M-30 -18 C-38 -22 -40 -12 -34 -6"/><path d="M18 -30 C22 -40 30 -36 28 -26"/><path d="M-20 12 C-24 0 -18 -12 -4 -12 C2 -8 8 -16 10 -18 C10 -12 16 -14 18 -10 C24 -2 22 10 16 16 C6 22 -12 22 -20 12 Z"/><ellipse cx="-10" cy="8" rx="2" ry="2.6"/><ellipse cx="8" cy="4" rx="2" ry="2.6"/></g><g transform="translate(1700 236) scale(0.85)"><ellipse cx="0" cy="0" rx="37" ry="33"/><ellipse cx="0" cy="2" rx="27" ry="23"/><path d="M-30 -18 C-38 -22 -40 -12 -34 -6"/><path d="M18 -30 C22 -40 30 -36 28 -26"/><path d="M-20 12 C-24 0 -18 -12 -4 -12 C2 -8 8 -16 10 -18 C10 -12 16 -14 18 -10 C24 -2 22 10 16 16 C6 22 -12 22 -20 12 Z"/><ellipse cx="-10" cy="8" rx="2" ry="2.6"/><ellipse cx="8" cy="4" rx="2" ry="2.6"/></g><g transform="translate(1936 276) scale(1.0)"><ellipse cx="0" cy="0" rx="37" ry="33"/><ellipse cx="0" cy="2" rx="27" ry="23"/><path d="M-30 -18 C-38 -22 -40 -12 -34 -6"/><path d="M18 -30 C22 -40 30 -36 28 -26"/><path d="M-20 12 C-24 0 -18 -12 -4 -12 C2 -8 8 -16 10 -18 C10 -12 16 -14 18 -10 C24 -2 22 10 16 16 C6 22 -12 22 -20 12 Z"/><ellipse cx="-10" cy="8" rx="2" ry="2.6"/><ellipse cx="8" cy="4" rx="2" ry="2.6"/></g><g stroke-dasharray="6 5"><path d="M1340.4,340.0 L1346.0,338.3 L1353.1,336.0 L1358.0,334.0 L1362.6,332.0 L1368.9,328.0 L1372.2,324.0 L1372.8,316.0 L1370.0,310.4 L1366.0,304.8 L1362.3,300.0 L1359.5,296.0 L1357.3,292.0 L1355.3,284.0 L1357.3,276.0 L1359.5,272.0 L1362.1,268.0 L1366.0,262.2 L1370.0,256.2 L1373.0,252.0 L1376.6,248.0 L1382.0,245.4 L1390.0,247.6 L1394.0,249.8 L1398.0,252.3 L1403.1,256.0 L1407.7,260.0 L1411.3,264.0 L1414.3,268.0 L1418.0,273.5 L1422.0,278.6 L1426.0,282.0 L1430.0,284.4 L1438.0,286.3 L1446.0,286.4 L1454.0,285.9 L1462.0,286.1 L1469.5,288.0 L1474.0,290.0 L1478.0,292.7 L1482.0,296.1 L1486.2,300.0 L1491.8,304.0 L1498.0,304.9 L1500.9,300.0 L1498.3,292.0 L1496.5,288.0 L1494.9,280.0 L1494.4,272.0 L1494.2,264.0 L1493.5,260.0 L1492.0,252.0 L1490.4,244.0 L1489.5,240.0 L1488.2,232.0 L1488.2,224.0 L1488.7,216.0 L1488.5,208.0 L1486.6,200.0 L1484.4,196.0 L1481.0,192.0 L1474.0,188.8 L1466.0,190.3 L1462.0,192.3 L1456.2,196.0 L1450.0,199.6 L1446.0,201.4 L1438.0,203.5 L1430.5,204.0 L1429.7,204.0 L1422.0,203.4 L1414.0,202.0 L1406.0,200.2 L1402.0,199.4 L1394.0,198.7 L1386.3,200.0 L1382.0,202.1 L1378.0,204.9 L1374.0,208.4 L1370.0,212.0 L1363.7,216.0 L1358.0,217.9 L1350.0,219.7 L1346.0,220.9 L1339.3,224.0 L1334.5,228.0 L1331.8,232.0 L1330.0,236.2 L1328.5,244.0 L1328.0,252.0 L1327.9,260.0 L1327.4,268.0 L1326.0,273.2 L1322.3,280.0 L1318.9,284.0 L1314.9,288.0 L1311.1,292.0 L1307.9,296.0 L1305.4,300.0 L1303.2,308.0 L1304.2,316.0 L1306.0,321.0 L1309.3,328.0 L1311.6,332.0 L1314.1,336.0 L1318.0,340.2 L1326.0,342.8 L1334.0,341.6 L1340.4,340.0"/><path d="M1653.5,220.0 L1658.0,217.0 L1661.2,212.0 L1662.6,208.0 L1662.9,200.0 L1661.8,196.0 L1658.0,191.4 L1650.0,191.4 L1646.0,195.0 L1643.0,200.0 L1641.5,204.0 L1641.0,212.0 L1642.2,216.0 L1646.9,220.0 L1653.5,220.0"/><path d="M1915.3,236.0 L1921.1,232.0 L1922.5,228.0 L1921.6,224.0 L1918.0,219.6 L1913.0,216.0 L1906.0,212.5 L1902.0,211.0 L1894.0,210.3 L1890.0,215.3 L1889.9,220.0 L1891.1,224.0 L1894.0,229.7 L1898.0,233.8 L1902.0,236.1 L1910.0,237.1 L1915.3,236.0"/><path d="M1843.2,376.0 L1850.0,373.2 L1854.0,370.6 L1858.0,366.9 L1862.0,361.6 L1864.9,356.0 L1866.2,352.0 L1867.5,344.0 L1867.2,336.0 L1866.0,328.2 L1865.3,324.0 L1864.7,316.0 L1866.0,308.3 L1867.4,304.0 L1870.0,298.1 L1872.2,292.0 L1870.9,284.0 L1866.0,280.6 L1862.0,279.4 L1854.0,278.8 L1846.0,279.3 L1842.0,280.1 L1834.0,283.8 L1830.0,287.8 L1827.4,292.0 L1825.5,296.0 L1822.5,304.0 L1821.2,308.0 L1818.5,316.0 L1817.2,320.0 L1814.3,328.0 L1812.8,332.0 L1810.0,339.2 L1808.2,344.0 L1806.1,352.0 L1805.8,356.0 L1806.4,360.0 L1810.0,366.3 L1814.0,370.0 L1818.0,372.7 L1826.0,376.0 L1830.0,376.9 L1838.0,377.1 L1843.2,376.0"/><path d="M1754.9,404.0 L1759.9,400.0 L1763.4,396.0 L1766.0,391.6 L1767.2,384.0 L1765.1,380.0 L1758.0,376.7 L1750.0,376.3 L1742.0,377.5 L1735.0,380.0 L1730.5,384.0 L1729.2,388.0 L1730.0,393.6 L1733.1,400.0 L1736.7,404.0 L1742.0,407.3 L1750.0,406.6 L1754.9,404.0"/><path d="M1369.9,156.0 L1374.0,159.1 L1378.0,160.1 L1382.0,158.5"/><path d="M1510.7,156.0 L1509.8,160.0 L1506.0,167.2 L1498.9,164.0 L1494.0,161.4 L1490.0,159.9 L1482.0,158.6 L1474.0,159.1 L1469.9,160.0 L1462.0,162.8 L1458.0,164.9 L1453.3,168.0 L1448.3,172.0 L1443.7,176.0 L1438.5,180.0 L1434.0,182.3 L1428.2,184.0 L1422.0,184.3 L1418.0,183.9 L1410.0,181.8 L1404.8,180.0 L1398.0,177.1 L1394.0,175.4 L1386.0,172.1 L1382.0,171.0 L1378.0,172.3 L1373.9,176.0 L1370.0,180.3 L1366.0,184.9 L1362.0,189.1 L1358.0,192.7 L1353.5,196.0 L1346.0,199.9 L1342.0,201.3 L1334.0,203.6 L1330.0,204.8 L1322.2,208.0 L1318.0,211.5 L1315.3,216.0 L1314.0,220.0 L1313.0,228.0 L1313.0,236.0 L1313.0,244.0 L1312.6,252.0 L1311.0,260.0 L1309.5,264.0 L1306.0,270.1 L1302.0,274.9 L1298.0,278.5 L1294.0,281.5"/><path d="M1387.3,416.0 L1390.1,412.0 L1394.0,404.1 L1395.4,400.0 L1397.1,392.0 L1397.7,384.0 L1397.4,376.0 L1396.9,368.0 L1397.5,360.0 L1398.5,356.0 L1402.0,348.0 L1404.0,344.0 L1406.2,340.0 L1409.7,332.0 L1411.1,328.0 L1413.9,320.0 L1415.9,316.0 L1419.7,312.0 L1426.0,309.3 L1432.0,308.0 L1438.0,307.3 L1446.0,306.9 L1454.0,307.7 L1458.0,309.0 L1463.3,312.0 L1467.7,316.0 L1470.8,320.0 L1474.0,325.7 L1476.7,332.0 L1478.1,336.0 L1480.8,344.0 L1482.4,348.0 L1486.0,354.9 L1490.0,359.7 L1494.0,362.7 L1498.0,364.4 L1505.5,364.0 L1510.0,361.2 L1513.8,356.0 L1515.6,352.0 L1518.0,345.3 L1519.8,340.0 L1522.0,334.8 L1525.5,328.0 L1527.9,324.0 L1530.0,319.9 L1534.0,314.5 L1542.0,312.3 L1546.0,311.5 L1554.0,309.3 L1558.0,307.2 L1562.8,304.0 L1567.1,300.0 L1570.4,296.0 L1574.0,289.8 L1575.7,284.0 L1576.5,276.0 L1575.6,268.0 L1574.0,262.9 L1570.0,256.4 L1566.0,252.2 L1562.0,249.5 L1558.0,247.0 L1551.1,244.0 L1546.0,243.0 L1538.0,242.5 L1530.0,243.0 L1523.4,244.0 L1518.0,244.1 L1516.5,240.0 L1518.0,232.5 L1519.9,228.0 L1522.7,224.0 L1528.9,220.0 L1534.0,218.6 L1542.0,217.6 L1550.0,216.7 L1555.0,216.0 L1562.0,214.6 L1568.4,212.0 L1571.3,208.0 L1572.4,200.0 L1572.3,192.0 L1572.0,184.0 L1571.3,176.0 L1570.2,168.0 L1569.2,164.0 L1566.2,156.0"/><path d="M1718.2,156.0 L1718.0,162.9 L1717.1,168.0 L1715.0,176.0 L1714.0,182.3 L1714.0,185.9 L1715.2,192.0 L1718.0,197.9 L1722.0,201.7 L1730.0,202.0 L1735.5,200.0 L1742.0,196.8 L1746.0,194.0 L1750.0,190.3 L1754.0,184.5 L1755.8,180.0 L1758.0,172.9 L1759.7,168.0 L1762.0,163.3 L1766.0,157.6"/><path d="M1820.9,156.0 L1823.1,160.0 L1826.0,164.1 L1830.5,168.0 L1838.0,171.8 L1842.0,173.4 L1847.6,176.0 L1853.3,180.0 L1856.7,184.0 L1858.9,188.0 L1861.3,196.0 L1862.1,200.0 L1863.6,208.0 L1865.7,216.0 L1866.9,220.0 L1869.4,228.0 L1870.6,232.0 L1872.0,240.0 L1870.8,248.0 L1867.7,252.0 L1862.0,255.2 L1858.0,256.3 L1850.0,256.8 L1844.5,256.0 L1838.0,253.7 L1834.0,251.3 L1830.0,247.3 L1826.1,240.0 L1824.9,236.0 L1823.0,228.0 L1821.9,224.0 L1818.0,216.4 L1814.0,212.0 L1810.0,209.5 L1802.0,209.0 L1797.2,212.0 L1794.0,216.2 L1790.5,224.0 L1788.8,228.0 L1786.0,232.4 L1781.9,236.0 L1774.0,238.7 L1766.0,239.8 L1762.0,240.1 L1754.0,240.5 L1747.4,240.0 L1742.0,238.4 L1738.0,234.8 L1734.6,228.0 L1732.5,224.0 L1730.0,218.8 L1726.0,213.0 L1722.0,208.7 L1718.0,206.0 L1710.0,204.7 L1704.7,204.0 L1698.0,203.5 L1690.0,200.8 L1688.1,196.0 L1686.0,190.9 L1682.0,184.0 L1678.5,180.0 L1674.0,176.2 L1670.0,173.5 L1666.0,171.4 L1658.0,168.8 L1650.0,168.9 L1643.4,172.0 L1638.9,176.0 L1635.6,180.0 L1632.8,184.0 L1630.0,188.3 L1626.0,194.4 L1622.0,200.0 L1618.8,204.0 L1615.1,208.0 L1610.8,212.0 L1606.0,215.8 L1602.0,218.5 L1598.0,220.9 L1594.0,224.4 L1593.9,232.0 L1596.4,236.0 L1600.3,240.0 L1606.0,243.6 L1610.0,245.2 L1618.0,247.4 L1622.0,248.5 L1630.0,250.8 L1634.0,252.2 L1642.0,255.5 L1646.0,257.5 L1650.6,260.0 L1657.0,264.0 L1662.0,267.5 L1666.0,270.2 L1670.0,272.1 L1674.0,271.7 L1679.6,268.0 L1686.0,267.5 L1691.6,268.0 L1698.0,268.3 L1703.9,268.0 L1710.0,266.9 L1718.0,265.7 L1726.0,266.5 L1730.0,269.3 L1734.0,274.1 L1737.9,280.0 L1740.8,284.0 L1745.1,288.0 L1750.0,290.6 L1754.3,292.0 L1762.0,293.4 L1770.0,294.3 L1778.0,295.8 L1782.0,297.7 L1786.0,302.5 L1787.4,308.0 L1787.1,316.0 L1786.0,320.7 L1783.1,328.0 L1780.7,332.0 L1777.7,336.0 L1773.8,340.0 L1768.5,344.0 L1762.0,347.5 L1758.0,348.9 L1750.0,350.6 L1742.0,350.2 L1736.5,348.0 L1733.1,344.0 L1731.2,336.0 L1730.5,328.0 L1729.9,324.0 L1727.3,316.0 L1724.7,312.0 L1720.5,308.0 L1714.0,304.1 L1710.0,302.2 L1705.4,300.0 L1698.0,296.1 L1694.0,293.8 L1690.0,291.5 L1683.7,288.0 L1678.0,285.4 L1674.0,289.5 L1673.4,296.0 L1673.7,304.0 L1674.1,308.0 L1674.7,316.0 L1674.0,324.0 L1673.0,328.0 L1670.0,334.0 L1666.0,339.0 L1662.0,342.8 L1658.0,345.7 L1653.4,348.0 L1646.0,350.1 L1638.0,349.9 L1630.0,348.9 L1624.7,348.0 L1618.0,346.8 L1610.0,344.5 L1606.0,342.8 L1601.4,340.0 L1596.5,336.0 L1593.0,332.0 L1590.0,327.9 L1586.0,322.8 L1582.0,319.3 L1574.0,317.1 L1566.0,318.7 L1562.0,321.5 L1559.9,328.0 L1562.0,335.9 L1563.5,340.0 L1565.8,348.0 L1566.7,352.0 L1568.4,360.0 L1570.0,364.5 L1574.0,369.6 L1578.0,372.2 L1586.0,374.9 L1590.7,376.0 L1598.0,377.2 L1606.0,378.0 L1614.0,377.8 L1622.0,376.5 L1626.0,375.3 L1633.9,372.0 L1638.0,369.8 L1642.0,367.9 L1650.0,364.8 L1658.0,364.4 L1666.0,365.8 L1672.8,368.0 L1678.0,369.7 L1683.2,372.0 L1690.0,375.6 L1694.0,378.6 L1698.0,382.5 L1702.0,387.4 L1705.2,392.0 L1707.8,396.0 L1710.2,400.0 L1714.0,406.9 L1716.2,412.0"/><path d="M2034.0,285.6 L2026.0,287.0 L2018.0,285.9 L2010.9,284.0 L2006.0,282.6 L1998.0,280.4 L1994.0,279.5 L1986.0,278.5 L1979.7,276.0 L1978.0,269.2 L1977.1,264.0 L1975.6,256.0 L1974.0,248.6 L1972.3,244.0 L1970.0,239.4 L1966.0,232.9 L1962.7,228.0 L1960.0,224.0 L1957.1,220.0 L1954.0,215.7 L1950.0,210.4 L1946.0,205.5 L1942.0,201.4 L1938.0,198.1 L1934.0,195.7 L1926.7,192.0 L1922.0,189.6 L1918.0,187.1 L1913.9,184.0 L1910.0,179.3 L1907.4,172.0 L1909.8,164.0 L1912.2,160.0 L1914.8,156.0"/><path d="M1954.0,324.3 L1946.0,326.7 L1938.0,326.7 L1930.0,325.5 L1922.4,324.0 L1918.0,323.0 L1910.0,320.4 L1909.1,316.0 L1911.2,312.0 L1918.0,310.7 L1926.0,311.2 L1934.0,311.3 L1942.0,310.4 L1950.0,308.5 L1954.0,306.9 L1960.7,304.0 L1966.0,301.7 L1966.9,308.0 L1965.2,312.0 L1962.0,317.2 L1958.0,321.5 L1954.0,324.3"/><path d="M1917.4,416.0 L1919.7,412.0 L1922.0,407.7 L1925.6,400.0 L1927.5,396.0 L1930.0,391.5 L1934.0,386.8 L1938.4,384.0 L1946.0,381.6 L1953.1,380.0 L1958.0,378.7 L1964.7,376.0 L1970.0,373.1 L1974.0,370.2 L1978.0,366.9 L1982.0,363.1 L1986.0,358.9 L1990.0,354.3 L1994.0,349.3 L1998.0,344.3 L2001.7,340.0 L2005.7,336.0 L2010.0,332.6 L2014.0,330.2 L2022.0,328.4 L2028.8,332.0 L2031.2,336.0 L2032.5,344.0 L2031.2,352.0 L2030.0,356.4 L2028.1,364.0 L2027.4,372.0 L2028.1,380.0 L2030.0,387.2 L2031.9,392.0"/><path d="M1290.0,401.0 L1294.0,404.4 L1302.0,407.5 L1310.0,406.3 L1314.2,404.0 L1319.0,400.0 L1322.6,396.0 L1326.0,391.3 L1330.0,384.5 L1332.5,380.0 L1334.8,376.0 L1338.0,371.4 L1342.0,367.3 L1347.6,364.0 L1354.0,362.4 L1361.9,364.0 L1364.6,368.0 L1364.6,376.0 L1362.8,384.0 L1361.8,388.0 L1360.6,396.0 L1361.0,404.0 L1362.0,408.1 L1366.0,415.7"/><path d="M1563.9,416.0 L1560.9,412.0 L1556.8,408.0 L1550.5,404.0 L1546.0,402.2 L1538.0,401.1 L1530.0,402.0 L1524.2,404.0 L1518.0,408.0 L1514.5,412.0 L1512.2,416.0"/><path d="M1771.4,416.0 L1776.0,412.0 L1781.3,408.0 L1786.0,404.8 L1790.0,402.5 L1798.0,400.1 L1806.0,401.2 L1810.6,404.0 L1814.4,408.0 L1818.0,414.0"/><path d="M1632.9,156.0 L1630.0,160.9 L1626.2,168.0 L1623.9,172.0 L1621.4,176.0 L1618.0,180.8 L1614.0,185.0 L1609.8,188.0 L1602.0,190.3 L1594.8,188.0 L1591.0,184.0 L1588.9,180.0 L1586.6,172.0 L1586.0,167.9 L1585.5,160.0"/><path d="M2034.0,259.7 L2030.0,260.6 L2025.5,260.0 L2019.0,256.0 L2015.3,252.0 L2012.3,248.0 L2009.2,244.0 L2005.9,240.0 L2002.0,235.5 L1998.0,230.9 L1994.0,226.2 L1990.0,221.0 L1986.4,216.0 L1983.7,212.0 L1981.4,208.0 L1978.1,200.0 L1977.4,196.0 L1978.0,190.7 L1981.9,184.0 L1986.0,180.6 L1990.0,178.2 L1994.3,176.0 L2002.0,172.8 L2006.0,171.7 L2014.0,170.9 L2020.1,172.0 L2026.0,174.6 L2030.0,177.6 L2034.0,182.3"/><path d="M1290.0,193.2 L1290.5,200.0 L1290.4,208.0 L1290.4,216.0 L1290.8,224.0 L1291.9,232.0 L1293.3,240.0 L1293.6,248.0 L1290.5,256.0"/><path d="M1642.0,328.1 L1634.0,329.7 L1626.0,328.8 L1622.0,327.4 L1617.0,324.0 L1613.8,320.0 L1610.8,312.0 L1610.4,304.0 L1611.7,296.0 L1614.0,290.3 L1618.0,284.3 L1622.0,280.9 L1626.0,279.2 L1634.0,279.2 L1638.0,281.0 L1642.0,284.0 L1646.0,288.8 L1649.9,296.0 L1651.4,300.0 L1653.1,308.0 L1652.6,316.0 L1650.0,321.9 L1646.0,325.9 L1642.0,328.1"/><path d="M1442.0,408.3 L1434.0,409.8 L1426.0,409.4 L1422.0,407.5 L1418.0,402.7 L1415.6,396.0 L1414.2,388.0 L1413.8,384.0 L1413.7,376.0 L1414.0,372.0 L1415.5,364.0 L1418.0,356.9 L1420.4,352.0 L1422.7,348.0 L1426.0,342.9 L1430.0,337.6 L1434.0,333.6 L1438.0,330.8 L1446.0,328.9 L1454.0,331.6 L1458.0,335.5 L1460.9,340.0 L1462.9,344.0 L1466.0,351.8 L1467.5,356.0 L1470.0,363.4 L1471.5,368.0 L1473.6,376.0 L1474.1,380.0 L1474.0,384.2 L1471.2,392.0 L1467.9,396.0 L1462.8,400.0 L1458.0,402.7 L1454.0,404.5 L1446.0,407.3 L1442.0,408.3"/><path d="M1585.7,416.0 L1586.5,412.0 L1590.0,405.5 L1594.0,402.6 L1602.0,400.1 L1606.0,399.6 L1614.0,399.3 L1622.0,399.6 L1630.0,399.9 L1638.0,399.1 L1643.9,396.0 L1650.0,392.7 L1654.0,391.0 L1662.0,389.5 L1670.0,390.3 L1675.5,392.0 L1682.0,395.6 L1686.0,398.9 L1690.0,403.7 L1692.2,408.0 L1692.9,416.0"/><path d="M1665.1,416.0 L1658.0,413.0 L1654.0,411.7 L1646.0,409.9 L1639.9,412.0 L1635.7,416.0"/><path d="M60.0,288.8 L52.0,291.9 L49.9,296.0 L48.0,300.0 L45.4,308.0 L44.0,312.0 L41.6,320.0 L40.0,325.1 L38.4,332.0 L39.1,340.0 L42.7,344.0 L48.0,346.2 L56.0,347.9 L60.0,348.4"/><path d="M-40.0,348.8 L-32.0,349.7 L-24.7,348.0 L-26.1,340.0 L-28.0,332.5 L-29.2,328.0 L-31.3,320.0 L-32.4,316.0 L-34.6,308.0 L-36.0,303.0 L-38.8,296.0"/><path d="M-6.2,416.0 L-2.0,412.0 L0.6,408.0 L3.6,400.0 L4.5,396.0 L5.4,388.0 L5.7,380.0 L5.0,372.0 L4.0,367.9 L0.0,361.5 L-4.0,358.3 L-8.5,356.0 L-16.0,353.3 L-22.9,356.0 L-22.8,364.0 L-23.4,372.0 L-24.1,376.0 L-25.8,384.0 L-28.0,391.3 L-29.3,396.0 L-30.8,404.0 L-29.1,412.0 L-25.2,416.0"/><path d="M-40.0,163.2 L-36.0,166.0 L-32.0,168.5 L-26.2,172.0 L-20.8,176.0 L-17.1,180.0 L-15.0,184.0 L-13.9,192.0 L-14.4,200.0 L-14.8,208.0 L-13.6,216.0 L-10.6,220.0 L-4.0,221.7 L0.0,219.8 L4.0,212.2 L4.9,208.0 L6.5,200.0 L8.0,192.1 L8.5,188.0 L9.3,180.0 L10.2,172.0 L11.5,164.0 L12.2,160.0"/><path d="M60.0,234.1 L55.2,232.0 L48.0,230.1 L40.0,229.0 L32.0,228.8 L24.0,230.0 L19.1,232.0 L16.6,240.0 L20.0,247.8 L22.9,252.0 L26.1,256.0 L29.2,260.0 L32.0,264.6 L34.6,272.0 L35.3,280.0 L34.9,288.0 L33.8,296.0 L32.0,304.0 L30.8,308.0 L28.0,315.3 L25.6,320.0 L23.2,324.0 L20.0,328.3 L16.0,332.2 L8.0,335.3 L0.0,333.5 L-4.0,331.0 L-8.0,327.3 L-12.0,322.1 L-15.4,316.0 L-17.1,312.0 L-19.8,304.0 L-20.8,300.0 L-22.3,292.0 L-23.1,284.0 L-23.5,276.0 L-23.8,268.0 L-24.2,264.0 L-26.0,256.0 L-28.0,251.4 L-32.0,244.6 L-35.8,240.0 L-40.0,236.4"/><path d="M13.6,416.0 L14.8,408.0 L15.6,400.0 L16.0,395.4 L16.8,388.0 L18.2,380.0 L20.0,374.1 L23.4,368.0 L28.0,364.0 L32.0,362.4 L40.0,361.4 L48.0,361.9 L55.9,364.0 L60.0,366.5"/><path d="M-40.0,371.3 L-38.5,376.0 L-38.8,384.0 L-40.0,388.6"/><path d="M60.0,398.9 L58.0,404.0 L56.1,412.0"/><path d="M60.0,206.1 L56.0,208.6 L48.0,210.0 L40.0,208.5 L36.0,206.0 L32.2,200.0 L31.7,196.0 L32.1,192.0 L35.2,184.0 L38.4,180.0 L44.0,177.1 L52.0,177.9 L56.8,180.0"/><path d="M-40.0,187.1 L-38.4,192.0 L-39.5,200.0"/><path d="M8.0,302.2 L3.4,300.0 L2.2,292.0 L5.8,288.0 L9.6,288.0 L12.9,292.0 L12.0,299.5 L8.0,302.2"/><path d="M36.0,400.5 L32.0,397.1 L31.1,392.0 L32.0,386.1 L36.0,380.4 L40.0,378.8 L45.7,380.0 L48.2,384.0 L47.8,388.0 L44.0,395.3 L40.0,399.2 L36.0,400.5"/></g></g></g></svg><div class="r" style="left:0px;top:0px;width:1999px;height:110px;background:#fff;"></div><div class="r" style="left:0px;top:0px;width:1999px;height:1px;background:#86a9ac;"></div><div class="r" style="left:0px;top:1px;width:1999px;height:1px;background:#c3d5d6;"></div><svg class="r" style="left:20px;top:8px" width="50" height="50" viewBox="0 0 50 50">
<rect x="0" y="0" width="50" height="50" rx="6.5" fill="#700707"/>
<path d="M42 27 L42 10.5 L35.5 4.6 L12 4.6 Q10 4.6 10 6.6 L10 43.2 Q10 45.2 12 45.2 L38 45.2 Q40 45.2 40.5 43.5" fill="none" stroke="#bcbcbc" stroke-width="2"/>
<circle cx="37.6" cy="9.4" r="0.9" fill="#bcbcbc"/>
<path d="M12.6 15.2 L19.4 15.2 L19.4 17.2 L15 17.2 L15 18.8 L19 18.8 L19 20.7 L15 20.7 L15 22.4 L19.6 22.4 L19.6 24.4 L12.6 24.4 Z" fill="#fff"/>
<circle cx="29.3" cy="20.2" r="8.7" fill="#fff"/>
<path d="M24 27.5 C25 22 26 18 27.5 15.5 M26.5 16 C30 14.5 32.5 16 30.5 19 C29.5 20.5 27.5 21 26.5 20.8 M28 20.8 L30.6 25.8 M29.5 21.5 C31 20 33.5 16.5 35.3 14.8 M30.5 17.5 L34.5 24 M23 27 C27 27.8 32 26.5 35.3 22.3" fill="none" stroke="#700707" stroke-width="1.25" stroke-linecap="round"/>
<path d="M28.7 35 L40.2 27 L40.2 30.7 L48 30.7 L48 38.8 L40.2 38.8 L40.2 43 Z" fill="#bcbcbc"/>
</svg><div class="r" style="left:712px;top:13px;width:499px;height:39px;box-sizing:border-box;border:1px solid #e0e0e0;border-radius:6px;background:#fff;"></div><svg class="r" style="left:732px;top:25px" width="18" height="18" viewBox="0 0 18 18">
<circle cx="7.3" cy="7.3" r="5.6" fill="none" stroke="#6b6b6b" stroke-width="2"/>
<path d="M11.4 11.4 L16.2 16.2" stroke="#6b6b6b" stroke-width="2.2" stroke-linecap="round"/></svg><div class="t" style="left:760.05px;top:22.85px;font-size:16.3px;line-height:21px;color:#6b6b6b;letter-spacing:0.006px;">Search...</div><div class="r" style="left:0;top:0"><div class="r" style="left:30.4px;top:72.5px;width:6.4px;height:6.4px;border-radius:50%;background:#747474"></div><div class="r" style="left:30.4px;top:82.4px;width:6.4px;height:6.4px;border-radius:50%;background:#747474"></div><div class="r" style="left:30.4px;top:92.8px;width:6.4px;height:6.4px;border-radius:50%;background:#747474"></div><div class="r" style="left:40.8px;top:72.5px;width:6.4px;height:6.4px;border-radius:50%;background:#747474"></div><div class="r" style="left:40.8px;top:82.4px;width:6.4px;height:6.4px;border-radius:50%;background:#747474"></div><div class="r" style="left:40.8px;top:92.8px;width:6.4px;height:6.4px;border-radius:50%;background:#747474"></div><div class="r" style="left:50.7px;top:72.5px;width:6.4px;height:6.4px;border-radius:50%;background:#747474"></div><div class="r" style="left:50.7px;top:82.4px;width:6.4px;height:6.4px;border-radius:50%;background:#747474"></div><div class="r" style="left:50.7px;top:92.8px;width:6.4px;height:6.4px;border-radius:50%;background:#747474"></div></div><div class="t" style="left:85.65px;top:72.64px;font-size:22.4px;line-height:29px;color:#181818;letter-spacing:-0.575px;">ERX Import RX</div><div class="r" style="left:1182px;top:64px;width:186px;height:46px;background:#f8eded;"></div><div class="r" style="left:1182px;top:64px;width:186px;height:3px;background:#b03f40;"></div><div class="t" style="left:277.85px;top:77.38px;font-size:16.8px;line-height:22px;color:#181818;letter-spacing:-0.5px;">Home</div><div class="t" style="left:352.65px;top:77.38px;font-size:16.8px;line-height:22px;color:#181818;letter-spacing:-0.078px;">Big Tables</div><svg class="r" style="left:446px;top:83px" width="16" height="11" viewBox="0 0 16 11"><path d="M1 2 L8 9 L15 2" fill="none" stroke="#747474" stroke-width="1.8"/></svg><div class="t" style="left:492.65px;top:77.38px;font-size:16.8px;line-height:22px;color:#181818;letter-spacing:0.114px;">Contacts</div><svg class="r" style="left:577px;top:83px" width="16" height="11" viewBox="0 0 16 11"><path d="M1 2 L8 9 L15 2" fill="none" stroke="#747474" stroke-width="1.8"/></svg><div class="t" style="left:623.65px;top:77.38px;font-size:16.8px;line-height:22px;color:#181818;letter-spacing:-0.195px;">Mapping Page</div><div class="t" style="left:761.75px;top:77.38px;font-size:16.8px;line-height:22px;color:#181818;letter-spacing:-0.209px;">Data Sources</div><svg class="r" style="left:879px;top:83px" width="16" height="11" viewBox="0 0 16 11"><path d="M1 2 L8 9 L15 2" fill="none" stroke="#747474" stroke-width="1.8"/></svg><div class="t" style="left:924.75px;top:77.38px;font-size:16.8px;line-height:22px;color:#181818;letter-spacing:0.05px;">Import Data</div><div class="t" style="left:1044.35px;top:77.38px;font-size:16.8px;line-height:22px;color:#181818;letter-spacing:0.089px;">Schedule Import</div><div class="t" style="left:1198.65px;top:77.38px;font-size:16.8px;line-height:22px;color:#181818;letter-spacing:0.042px;">Scheduled Jobs</div><svg class="r" style="left:1336px;top:83px" width="16" height="11" viewBox="0 0 16 11"><path d="M1 2 L8 9 L15 2" fill="none" stroke="#747474" stroke-width="1.8"/></svg><div class="r" style="left:0px;top:110px;width:1999px;height:3px;background:#b03f40;"></div><div class="r" style="left:0px;top:113px;width:1999px;height:1px;background:#c98485;"></div><div class="r" style="left:0px;top:113px;width:1999px;height:83px;background:#f3f3f3;"></div><div class="r" style="left:0px;top:114px;width:1999px;height:14px;background:linear-gradient(to bottom,rgba(0,0,0,0.055),rgba(0,0,0,0));"></div><div class="r" style="left:1658px;top:17px;width:51px;height:31px;box-sizing:border-box;border:1px solid #c6c6c6;border-radius:5px;background:#fff"></div>
<div class="r" style="left:1687.5px;top:18px;width:1.5px;height:29px;background:#c0c0c0"></div>
<svg class="r" style="left:1662px;top:22px" width="22" height="21" viewBox="0 0 22 21"><path d="M11 1.8 L13.6 8.2 L20.4 8.6 L15.2 12.9 L16.9 19.5 L11 15.8 L5.1 19.5 L6.8 12.9 L1.6 8.6 L8.4 8.2 Z" fill="#939393"/></svg>
<svg class="r" style="left:1692px;top:29px" width="13" height="9" viewBox="0 0 13 9"><path d="M0.5 1 L12.5 1 L6.5 8.5 Z" fill="#939393"/></svg>
<svg class="r" style="left:1729px;top:21px" width="25" height="26" viewBox="0 0 25 26"><rect x="0.3" y="0.5" width="24.6" height="25" rx="5" fill="#939393"/><path d="M12.6 4 L12.6 21.5 M4 13 L21 13" stroke="#fff" stroke-width="1.8"/></svg>
<svg class="r" style="left:1767px;top:21px" width="24" height="24" viewBox="0 0 24 24"><path d="M12 0 C6 2 1.2 8 0.6 14 L23.4 14 C22.8 8 18 2 12 0 Z" fill="#939393"/><path d="M0.8 16 L23.2 16 L23.2 19 C19 22 15 23.5 12 23.5 C9 23.5 5 22 0.8 19 Z" fill="#939393"/><path d="M4.6 14.4 L10.2 6 L14.2 14.4 M12.4 11.4 L15.6 7.8 L20 14.4" fill="none" stroke="#fff" stroke-width="1.5" stroke-linejoin="miter"/><path d="M10.8 15.6 C10.8 18.4 11.6 19.6 12.6 20.6 C13.2 21.4 13.2 22.6 13.2 24" fill="none" stroke="#fff" stroke-width="1.3"/></svg>
<svg class="r" style="left:1810px;top:20px" width="18" height="25" viewBox="0 0 18 25"><path d="M2.8 7.5 C2.8 3.8 5.5 1.8 9 1.8 C12.6 1.8 15.3 3.9 15.3 7.3 C15.3 10.5 12.8 11.8 10.9 13 C9.6 13.8 9 14.8 9 16.4 L9 17.6" fill="none" stroke="#939393" stroke-width="3.2" stroke-linecap="round"/><rect x="6.8" y="20.5" width="4.4" height="3.6" rx="0.6" fill="#939393"/></svg>
<svg class="r" style="left:1847px;top:21px" width="24" height="25" viewBox="0 0 24 25"><g fill="#939393"><rect x="9.6" y="0.6" width="4.6" height="5" rx="1.2"/><rect x="9.6" y="19.4" width="4.6" height="5" rx="1.2"/><rect x="9.6" y="0.6" width="4.6" height="5" rx="1.2" transform="rotate(60 11.9 12.5)"/><rect x="9.6" y="0.6" width="4.6" height="5" rx="1.2" transform="rotate(120 11.9 12.5)"/><rect x="9.6" y="0.6" width="4.6" height="5" rx="1.2" transform="rotate(240 11.9 12.5)"/><rect x="9.6" y="0.6" width="4.6" height="5" rx="1.2" transform="rotate(300 11.9 12.5)"/><circle cx="11.9" cy="12.5" r="8.6"/></g><circle cx="11.9" cy="12.5" r="5.3" fill="#fff"/><path d="M12.9 8.4 L9.8 13 L12 13 L11 16.6 L14.1 12 L11.9 12 Z" fill="#939393"/></svg>
<svg class="r" style="left:1887px;top:20px" width="24" height="25" viewBox="0 0 24 25"><path d="M11.6 1 C6.8 1 4.6 4.8 4.6 9 L4.6 14.5 L1.2 16.8 C0.2 17.5 0.6 19 1.8 19 L21.4 19 C22.6 19 23 17.5 22 16.8 L18.6 14.5 L18.6 9 C18.6 4.8 16.4 1 11.6 1 Z" fill="#939393"/><path d="M8.6 21.2 L14.6 21.2 C14.6 23 13.4 24 11.6 24 C9.8 24 8.6 23 8.6 21.2 Z" fill="#939393"/></svg>

<svg class="r" style="left:1960px;top:80px" width="19" height="19" viewBox="0 0 19 19"><path d="M13.5 1.5 L17.5 5.5 L16 7 L12 3 Z" fill="#747474"/><path d="M11 4 L15 8 L6 17 L2 13 Z" fill="#747474"/><path d="M1.2 14 L5 17.8 L0.8 18.2 Z" fill="#747474"/></svg>
<svg class="r" style="left:1932px;top:8px" width="44" height="44" viewBox="0 0 44 44"><defs><clipPath id="avc"><circle cx="22" cy="22" r="20.5"/></clipPath></defs><circle cx="22" cy="22" r="20.8" fill="#e7ebf1"/><g clip-path="url(#avc)"><path d="M7 44 C5.5 34 5 24 8.5 16 C10 12 14 9.5 22 9.5 C30 9.5 34 12 35.5 16 C39 24 38.5 34 37 44 Z" fill="#a3b7d5"/><path d="M9.5 8 C10.5 7 12.5 8 14.5 11 L10.5 14.5 C9.5 12 9 9.5 9.5 8 Z M34.5 8 C33.5 7 31.5 8 29.5 11 L33.5 14.5 C34.5 12 35 9.5 34.5 8 Z" fill="#5272a3"/><path d="M11.5 29 C11.5 23 14.5 18.5 20 17.5 C24 16.8 28 17.5 30.5 20.5 C32.5 23 33 26 33 29 C33 35 28.5 38.5 22.2 38.5 C15.8 38.5 11.5 35 11.5 29 Z" fill="#fff"/><path d="M11.8 28 C11.5 22 14.5 17.5 20.5 16.8 C25 16.3 29 17.5 31.5 21 L29.5 21.5 L30.5 24 L27.5 22.5 L26.5 25 L25.5 22 C22 22 19 23 16 23.5 L15.5 27.5 L14 26 Z" fill="#4a6aa0"/><ellipse cx="17.8" cy="29.6" rx="0.9" ry="1.1" fill="#4a6aa0"/><ellipse cx="26.8" cy="29.6" rx="0.9" ry="1.1" fill="#4a6aa0"/><ellipse cx="22.5" cy="46" rx="4.5" ry="4" fill="#4a6aa0"/></g><circle cx="22" cy="22" r="20.9" fill="none" stroke="#9a9a9a" stroke-width="1.6"/></svg><svg class="r" style="left:35px;top:133px" width="41" height="41" viewBox="0 0 41 41"><rect x="0" y="0" width="40.5" height="40.5" rx="5" fill="#e56fbe"/>
<circle cx="20.6" cy="21.6" r="9.3" fill="none" stroke="#fff" stroke-width="2.9"/>
<path d="M19.6 16 L19.6 21.8 L22.9 25" fill="none" stroke="#fff" stroke-width="1.9" stroke-linecap="round"/>
<path d="M7.3 14.2 Q6.6 7.6 14.6 7.6 Q15.4 8.6 14.6 9.8 Q10.2 10 9.6 14.4 Q8.4 15 7.3 14.2 Z" fill="#fff"/><path d="M33.9 14.2 Q34.6 7.6 26.6 7.6 Q25.8 8.6 26.6 9.8 Q31 10 31.6 14.4 Q32.8 15 33.9 14.2 Z" fill="#fff"/>
<path d="M13.2 29.6 L10.8 32" stroke="#fff" stroke-width="2.8" stroke-linecap="round"/><path d="M28 29.6 L30.4 32" stroke="#fff" stroke-width="2.8" stroke-linecap="round"/></svg><div class="t" style="left:91.05px;top:130.68px;font-size:16.8px;line-height:22px;color:#4a4a4a;letter-spacing:0.038px;">Scheduled Job</div><div class="t" style="left:91.65px;top:150.85px;font-size:21.5px;line-height:28px;color:#181818;font-weight:700;letter-spacing:0.013px;">Weekly v1</div><div class="r" style="left:1548px;top:136px;width:414px;height:38px;box-sizing:border-box;border:1px solid #dcdcdc;border-radius:5px;background:#fff"></div>
<div class="r" style="left:1637px;top:137px;width:1px;height:36px;background:#dcdcdc"></div>
<div class="r" style="left:1786px;top:137px;width:1px;height:36px;background:#dcdcdc"></div><div class="t" style="left:1568.85px;top:145.68px;font-size:16.8px;line-height:22px;color:#0b6fd1;letter-spacing:-0.05px;">Delete</div><div class="t" style="left:1658.35px;top:145.68px;font-size:16.8px;line-height:22px;color:#0b6fd1;letter-spacing:0.019px;">Printable View</div><div class="t" style="left:1806.85px;top:145.68px;font-size:16.8px;line-height:22px;color:#0b6fd1;letter-spacing:0.034px;">Sharing Hierarchy</div><div class="r" style="left:0px;top:196px;width:1999px;height:1px;background:#d6d6d6;"></div><div class="r" style="left:16px;top:197px;width:1318px;height:924px;background:#fff;"></div><div class="r" style="left:16px;top:197px;width:1318px;height:5px;background:linear-gradient(to bottom,rgba(0,0,0,0.06),rgba(0,0,0,0));"></div><div class="t" style="left:51.35px;top:207.21px;font-size:19.6px;line-height:25px;color:#444444;letter-spacing:-0.125px;">Related</div><div class="t" style="left:179.45px;top:206.57px;font-size:20.0px;line-height:26px;color:#181818;font-weight:700;letter-spacing:0.15px;">Details</div><div class="r" style="left:35px;top:242px;width:1278px;height:1px;background:#e5e5e5;"></div><div class="r" style="left:164px;top:240px;width:97px;height:3px;background:#3a8ef0;"></div><div class="t" style="left:55.85px;top:279.96px;font-size:15.4px;line-height:20px;color:#444444;letter-spacing:0.043px;">Job Name</div><div class="t" style="left:55.85px;top:307.21px;font-size:17.0px;line-height:22px;color:#181818;letter-spacing:0.1px;">Weekly v1</div><div class="r" style="left:51px;top:337px;width:609px;height:1px;background:#ebebeb;"></div><svg class="r" style="left:635.8px;top:303.90000000000003px" width="19" height="19" viewBox="0 0 17 17"><g fill="#dcdcdc" transform="translate(8.6 8.4) rotate(-45) translate(-10.6 0)"><path d="M0 0 L4 -1.9 L4 1.9 Z"/><rect x="4.9" y="-1.9" width="10.6" height="3.8"/><rect x="16.4" y="-1.9" width="3.8" height="3.8" rx="1.3"/></g></svg><div class="t" style="left:55.85px;top:344.16px;font-size:15.4px;line-height:20px;color:#444444;letter-spacing:0.04px;">Data Source</div><div class="t" style="left:55.85px;top:371.41px;font-size:17.0px;line-height:22px;color:#181818;letter-spacing:0.444px;">Cron v6_8</div><div class="r" style="left:51px;top:397px;width:609px;height:1px;background:#ebebeb;"></div><svg class="r" style="left:635.8px;top:368.1px" width="19" height="19" viewBox="0 0 17 17"><g fill="#dcdcdc" transform="translate(8.6 8.4) rotate(-45) translate(-10.6 0)"><path d="M0 0 L4 -1.9 L4 1.9 Z"/><rect x="4.9" y="-1.9" width="10.6" height="3.8"/><rect x="16.4" y="-1.9" width="3.8" height="3.8" rx="1.3"/></g></svg><div class="t" style="left:55.85px;top:404.36px;font-size:15.4px;line-height:20px;color:#444444;letter-spacing:0.17px;">Status</div><div class="t" style="left:55.85px;top:431.61px;font-size:17.0px;line-height:22px;color:#181818;letter-spacing:0.258px;">Running</div><div class="r" style="left:51px;top:457px;width:609px;height:1px;background:#ebebeb;"></div><svg class="r" style="left:635.8px;top:428.3px" width="19" height="19" viewBox="0 0 17 17"><g fill="#dcdcdc" transform="translate(8.6 8.4) rotate(-45) translate(-10.6 0)"><path d="M0 0 L4 -1.9 L4 1.9 Z"/><rect x="4.9" y="-1.9" width="10.6" height="3.8"/><rect x="16.4" y="-1.9" width="3.8" height="3.8" rx="1.3"/></g></svg><div class="t" style="left:694.85px;top:279.96px;font-size:15.4px;line-height:20px;color:#444444;letter-spacing:0.037px;">Owner</div><div class="r" style="left:690px;top:337px;width:609px;height:1px;background:#ebebeb;"></div><svg class="r" style="left:694px;top:305.2px" width="26.5" height="26.5" viewBox="0 0 44 44"><defs><clipPath id="ava2"><circle cx="22" cy="22" r="20.5"/></clipPath></defs><circle cx="22" cy="22" r="20.8" fill="#e7ebf1"/><g clip-path="url(#ava2)"><path d="M7 44 C5.5 34 5 24 8.5 16 C10 12 14 9.5 22 9.5 C30 9.5 34 12 35.5 16 C39 24 38.5 34 37 44 Z" fill="#a3b7d5"/><path d="M9.5 8 C10.5 7 12.5 8 14.5 11 L10.5 14.5 C9.5 12 9 9.5 9.5 8 Z M34.5 8 C33.5 7 31.5 8 29.5 11 L33.5 14.5 C34.5 12 35 9.5 34.5 8 Z" fill="#5272a3"/><path d="M11.5 29 C11.5 23 14.5 18.5 20 17.5 C24 16.8 28 17.5 30.5 20.5 C32.5 23 33 26 33 29 C33 35 28.5 38.5 22.2 38.5 C15.8 38.5 11.5 35 11.5 29 Z" fill="#fff"/><path d="M11.8 28 C11.5 22 14.5 17.5 20.5 16.8 C25 16.3 29 17.5 31.5 21 L29.5 21.5 L30.5 24 L27.5 22.5 L26.5 25 L25.5 22 C22 22 19 23 16 23.5 L15.5 27.5 L14 26 Z" fill="#4a6aa0"/><ellipse cx="17.8" cy="29.6" rx="0.9" ry="1.1" fill="#4a6aa0"/><ellipse cx="26.8" cy="29.6" rx="0.9" ry="1.1" fill="#4a6aa0"/><ellipse cx="22.5" cy="46" rx="4.5" ry="4" fill="#4a6aa0"/></g></svg><div class="t" style="left:727.35px;top:308.41px;font-size:17.0px;line-height:22px;color:#0b6fd1;letter-spacing:0.566px;">Development Admin</div><div class="r" style="left:727px;top:329px;width:162px;height:1px;background-image:linear-gradient(to right,#0b6fd1 50%,transparent 50%);background-size:3px 1px;"></div><svg class="r" style="left:1274px;top:310px" width="20" height="20" viewBox="0 0 20 20"><ellipse cx="8" cy="9.5" rx="2.9" ry="3.2" fill="#f1f1f1"/><path d="M2.6 17.8 C2.6 14.5 5 13.4 8 13.4 C11 13.4 13.4 14.5 13.4 17.8 Z" fill="#f1f1f1"/><path d="M10.4 2.6 C13.5 2.6 16 4.8 16.4 8.2" fill="none" stroke="#f1f1f1" stroke-width="2" stroke-linecap="round"/></svg><div class="t" style="left:694.85px;top:344.16px;font-size:15.4px;line-height:20px;color:#444444;letter-spacing:0.155px;">Start Job ID</div><div class="t" style="left:694.85px;top:371.41px;font-size:17.0px;line-height:22px;color:#181818;letter-spacing:0.589px;">08e5g00001EwlEe</div><div class="r" style="left:690px;top:397px;width:609px;height:1px;background:#ebebeb;"></div><svg class="r" style="left:1273.8px;top:368.1px" width="19" height="19" viewBox="0 0 17 17"><g fill="#dcdcdc" transform="translate(8.6 8.4) rotate(-45) translate(-10.6 0)"><path d="M0 0 L4 -1.9 L4 1.9 Z"/><rect x="4.9" y="-1.9" width="10.6" height="3.8"/><rect x="16.4" y="-1.9" width="3.8" height="3.8" rx="1.3"/></g></svg><div class="t" style="left:694.85px;top:404.36px;font-size:15.4px;line-height:20px;color:#444444;letter-spacing:0.104px;">Continue Job ID</div><div class="t" style="left:694.85px;top:431.61px;font-size:17.0px;line-height:22px;color:#181818;letter-spacing:0.693px;">08e5g00001EwlGf</div><div class="r" style="left:690px;top:457px;width:609px;height:1px;background:#ebebeb;"></div><svg class="r" style="left:1273.8px;top:428.3px" width="19" height="19" viewBox="0 0 17 17"><g fill="#dcdcdc" transform="translate(8.6 8.4) rotate(-45) translate(-10.6 0)"><path d="M0 0 L4 -1.9 L4 1.9 Z"/><rect x="4.9" y="-1.9" width="10.6" height="3.8"/><rect x="16.4" y="-1.9" width="3.8" height="3.8" rx="1.3"/></g></svg><div class="t" style="left:694.85px;top:464.36px;font-size:15.4px;line-height:20px;color:#444444;letter-spacing:0.107px;">Start Cron Expression</div><div class="t" style="left:694.85px;top:491.61px;font-size:17.0px;line-height:22px;color:#181818;letter-spacing:0.442px;">0 45 19 14 2 ? 2023</div><div class="r" style="left:690px;top:517px;width:609px;height:1px;background:#ebebeb;"></div><svg class="r" style="left:1273.8px;top:488.3px" width="19" height="19" viewBox="0 0 17 17"><g fill="#dcdcdc" transform="translate(8.6 8.4) rotate(-45) translate(-10.6 0)"><path d="M0 0 L4 -1.9 L4 1.9 Z"/><rect x="4.9" y="-1.9" width="10.6" height="3.8"/><rect x="16.4" y="-1.9" width="3.8" height="3.8" rx="1.3"/></g></svg><div class="t" style="left:694.85px;top:524.36px;font-size:15.4px;line-height:20px;color:#444444;letter-spacing:0.085px;">Continue Cron Expression</div><div class="t" style="left:694.85px;top:551.61px;font-size:17.0px;line-height:22px;color:#181818;letter-spacing:0.417px;">0 45 19 ? * 3</div><div class="r" style="left:690px;top:577px;width:609px;height:1px;background:#ebebeb;"></div><svg class="r" style="left:1273.8px;top:548.3px" width="19" height="19" viewBox="0 0 17 17"><g fill="#dcdcdc" transform="translate(8.6 8.4) rotate(-45) translate(-10.6 0)"><path d="M0 0 L4 -1.9 L4 1.9 Z"/><rect x="4.9" y="-1.9" width="10.6" height="3.8"/><rect x="16.4" y="-1.9" width="3.8" height="3.8" rx="1.3"/></g></svg><div class="r" style="left:36px;top:578px;width:1277px;height:38.5px;background:#f3f3f3;border-radius:4px;"></div><svg class="r" style="left:48px;top:593px" width="19" height="12" viewBox="0 0 19 12"><path d="M1.5 1.5 L9.2 9.6 L16.9 1.5" fill="none" stroke="#747474" stroke-width="2"/></svg><div class="t" style="left:77.55px;top:585.14px;font-size:19.8px;line-height:26px;color:#181818;letter-spacing:0.093px;">Schedule</div><div class="t" style="left:55.85px;top:634.66px;font-size:15.4px;line-height:20px;color:#444444;letter-spacing:0.172px;">Start Date</div><div class="t" style="left:55.85px;top:661.91px;font-size:17.0px;line-height:22px;color:#181818;letter-spacing:0.706px;">2/14/2023</div><div class="r" style="left:51px;top:687px;width:609px;height:1px;background:#ebebeb;"></div><svg class="r" style="left:635.8px;top:658.5999999999999px" width="19" height="19" viewBox="0 0 17 17"><g fill="#dcdcdc" transform="translate(8.6 8.4) rotate(-45) translate(-10.6 0)"><path d="M0 0 L4 -1.9 L4 1.9 Z"/><rect x="4.9" y="-1.9" width="10.6" height="3.8"/><rect x="16.4" y="-1.9" width="3.8" height="3.8" rx="1.3"/></g></svg><div class="t" style="left:55.85px;top:694.36px;font-size:15.4px;line-height:20px;color:#444444;letter-spacing:-0.143px;">End Date</div><div class="t" style="left:55.85px;top:721.61px;font-size:17.0px;line-height:22px;color:#181818;letter-spacing:0.956px;">2/28/2023</div><div class="r" style="left:51px;top:747px;width:609px;height:1px;background:#ebebeb;"></div><svg class="r" style="left:635.8px;top:718.3px" width="19" height="19" viewBox="0 0 17 17"><g fill="#dcdcdc" transform="translate(8.6 8.4) rotate(-45) translate(-10.6 0)"><path d="M0 0 L4 -1.9 L4 1.9 Z"/><rect x="4.9" y="-1.9" width="10.6" height="3.8"/><rect x="16.4" y="-1.9" width="3.8" height="3.8" rx="1.3"/></g></svg><div class="t" style="left:694.85px;top:634.66px;font-size:15.4px;line-height:20px;color:#444444;letter-spacing:0.031px;">Frequency</div><div class="t" style="left:694.85px;top:661.91px;font-size:17.0px;line-height:22px;color:#181818;letter-spacing:0.493px;">Weekly - Tuesday</div><div class="r" style="left:690px;top:687px;width:609px;height:1px;background:#ebebeb;"></div><svg class="r" style="left:1273.8px;top:658.5999999999999px" width="19" height="19" viewBox="0 0 17 17"><g fill="#dcdcdc" transform="translate(8.6 8.4) rotate(-45) translate(-10.6 0)"><path d="M0 0 L4 -1.9 L4 1.9 Z"/><rect x="4.9" y="-1.9" width="10.6" height="3.8"/><rect x="16.4" y="-1.9" width="3.8" height="3.8" rx="1.3"/></g></svg><div class="t" style="left:694.85px;top:694.36px;font-size:15.4px;line-height:20px;color:#444444;letter-spacing:0.063px;">Next Run Date &amp; Time</div><div class="t" style="left:694.85px;top:721.61px;font-size:17.0px;line-height:22px;color:#181818;letter-spacing:0.465px;">2/21/2023, 7:45 PM</div><div class="r" style="left:690px;top:747px;width:609px;height:1px;background:#ebebeb;"></div><svg class="r" style="left:1273.8px;top:718.3px" width="19" height="19" viewBox="0 0 17 17"><g fill="#dcdcdc" transform="translate(8.6 8.4) rotate(-45) translate(-10.6 0)"><path d="M0 0 L4 -1.9 L4 1.9 Z"/><rect x="4.9" y="-1.9" width="10.6" height="3.8"/><rect x="16.4" y="-1.9" width="3.8" height="3.8" rx="1.3"/></g></svg><div class="t" style="left:694.85px;top:754.36px;font-size:15.4px;line-height:20px;color:#444444;letter-spacing:0.219px;">Preferred Time</div><div class="t" style="left:694.85px;top:781.61px;font-size:17.0px;line-height:22px;color:#181818;letter-spacing:0.538px;">19:45</div><div class="r" style="left:690px;top:807px;width:609px;height:1px;background:#ebebeb;"></div><svg class="r" style="left:1273.8px;top:778.3px" width="19" height="19" viewBox="0 0 17 17"><g fill="#dcdcdc" transform="translate(8.6 8.4) rotate(-45) translate(-10.6 0)"><path d="M0 0 L4 -1.9 L4 1.9 Z"/><rect x="4.9" y="-1.9" width="10.6" height="3.8"/><rect x="16.4" y="-1.9" width="3.8" height="3.8" rx="1.3"/></g></svg><div class="t" style="left:694.85px;top:814.36px;font-size:15.4px;line-height:20px;color:#444444;letter-spacing:-0.011px;">Batch Size</div><div class="t" style="left:694.85px;top:841.61px;font-size:17.0px;line-height:22px;color:#181818;">1</div><div class="r" style="left:690px;top:867px;width:609px;height:1px;background:#ebebeb;"></div><svg class="r" style="left:1273.8px;top:838.3px" width="19" height="19" viewBox="0 0 17 17"><g fill="#dcdcdc" transform="translate(8.6 8.4) rotate(-45) translate(-10.6 0)"><path d="M0 0 L4 -1.9 L4 1.9 Z"/><rect x="4.9" y="-1.9" width="10.6" height="3.8"/><rect x="16.4" y="-1.9" width="3.8" height="3.8" rx="1.3"/></g></svg><div class="r" style="left:36px;top:888.5px;width:1277px;height:38.5px;background:#f3f3f3;border-radius:4px;"></div><svg class="r" style="left:48px;top:903.5px" width="19" height="12" viewBox="0 0 19 12"><path d="M1.5 1.5 L9.2 9.6 L16.9 1.5" fill="none" stroke="#747474" stroke-width="2"/></svg><div class="t" style="left:77.55px;top:895.64px;font-size:19.8px;line-height:26px;color:#181818;letter-spacing:-0.017px;">Results of Last Run</div><div class="t" style="left:55.85px;top:944.46px;font-size:15.4px;line-height:20px;color:#444444;letter-spacing:0.123px;">Last Processed Succeeded Records</div><div class="t" style="left:55.85px;top:971.71px;font-size:17.0px;line-height:22px;color:#181818;letter-spacing:0.113px;">1,000</div><div class="r" style="left:51px;top:997.5px;width:609px;height:1px;background:#ebebeb;"></div><svg class="r" style="left:635.8px;top:968.3999999999999px" width="19" height="19" viewBox="0 0 17 17"><g fill="#dcdcdc" transform="translate(8.6 8.4) rotate(-45) translate(-10.6 0)"><path d="M0 0 L4 -1.9 L4 1.9 Z"/><rect x="4.9" y="-1.9" width="10.6" height="3.8"/><rect x="16.4" y="-1.9" width="3.8" height="3.8" rx="1.3"/></g></svg><div class="t" style="left:55.85px;top:1004.26px;font-size:15.4px;line-height:20px;color:#444444;letter-spacing:0.098px;">Last Processed Error Records</div><div class="t" style="left:55.85px;top:1031.51px;font-size:17.0px;line-height:22px;color:#181818;">0</div><div class="r" style="left:51px;top:1057.5px;width:609px;height:1px;background:#ebebeb;"></div><svg class="r" style="left:635.8px;top:1028.2px" width="19" height="19" viewBox="0 0 17 17"><g fill="#dcdcdc" transform="translate(8.6 8.4) rotate(-45) translate(-10.6 0)"><path d="M0 0 L4 -1.9 L4 1.9 Z"/><rect x="4.9" y="-1.9" width="10.6" height="3.8"/><rect x="16.4" y="-1.9" width="3.8" height="3.8" rx="1.3"/></g></svg><div class="t" style="left:55.85px;top:1063.66px;font-size:15.4px;line-height:20px;color:#444444;letter-spacing:0.23px;">Last Processed Duplicates Not Imported</div><div class="t" style="left:55.85px;top:1090.91px;font-size:17.0px;line-height:22px;color:#181818;">0</div><div class="r" style="left:51px;top:1117.5px;width:609px;height:1px;background:#ebebeb;"></div><svg class="r" style="left:635.8px;top:1087.6px" width="19" height="19" viewBox="0 0 17 17"><g fill="#dcdcdc" transform="translate(8.6 8.4) rotate(-45) translate(-10.6 0)"><path d="M0 0 L4 -1.9 L4 1.9 Z"/><rect x="4.9" y="-1.9" width="10.6" height="3.8"/><rect x="16.4" y="-1.9" width="3.8" height="3.8" rx="1.3"/></g></svg><div class="t" style="left:694.85px;top:944.46px;font-size:15.4px;line-height:20px;color:#444444;letter-spacing:0.148px;">Last Processed Total Records</div><div class="t" style="left:694.85px;top:971.71px;font-size:17.0px;line-height:22px;color:#181818;letter-spacing:0.187px;">1,000</div><div class="r" style="left:690px;top:997.5px;width:609px;height:1px;background:#ebebeb;"></div><svg class="r" style="left:1273.8px;top:968.3999999999999px" width="19" height="19" viewBox="0 0 17 17"><g fill="#dcdcdc" transform="translate(8.6 8.4) rotate(-45) translate(-10.6 0)"><path d="M0 0 L4 -1.9 L4 1.9 Z"/><rect x="4.9" y="-1.9" width="10.6" height="3.8"/><rect x="16.4" y="-1.9" width="3.8" height="3.8" rx="1.3"/></g></svg><div class="t" style="left:694.85px;top:1004.26px;font-size:15.4px;line-height:20px;color:#444444;letter-spacing:0.065px;">Last Run Date Time</div><div class="t" style="left:694.85px;top:1031.51px;font-size:17.0px;line-height:22px;color:#181818;letter-spacing:0.547px;">2/14/2023, 7:45 PM</div><div class="r" style="left:690px;top:1057.5px;width:609px;height:1px;background:#ebebeb;"></div><svg class="r" style="left:1273.8px;top:1028.2px" width="19" height="19" viewBox="0 0 17 17"><g fill="#dcdcdc" transform="translate(8.6 8.4) rotate(-45) translate(-10.6 0)"><path d="M0 0 L4 -1.9 L4 1.9 Z"/><rect x="4.9" y="-1.9" width="10.6" height="3.8"/><rect x="16.4" y="-1.9" width="3.8" height="3.8" rx="1.3"/></g></svg><div class="r" style="left:671px;top:335px;width:649px;height:255px;box-sizing:border-box;border:3px solid #ff2100;"></div>
</body></html>
